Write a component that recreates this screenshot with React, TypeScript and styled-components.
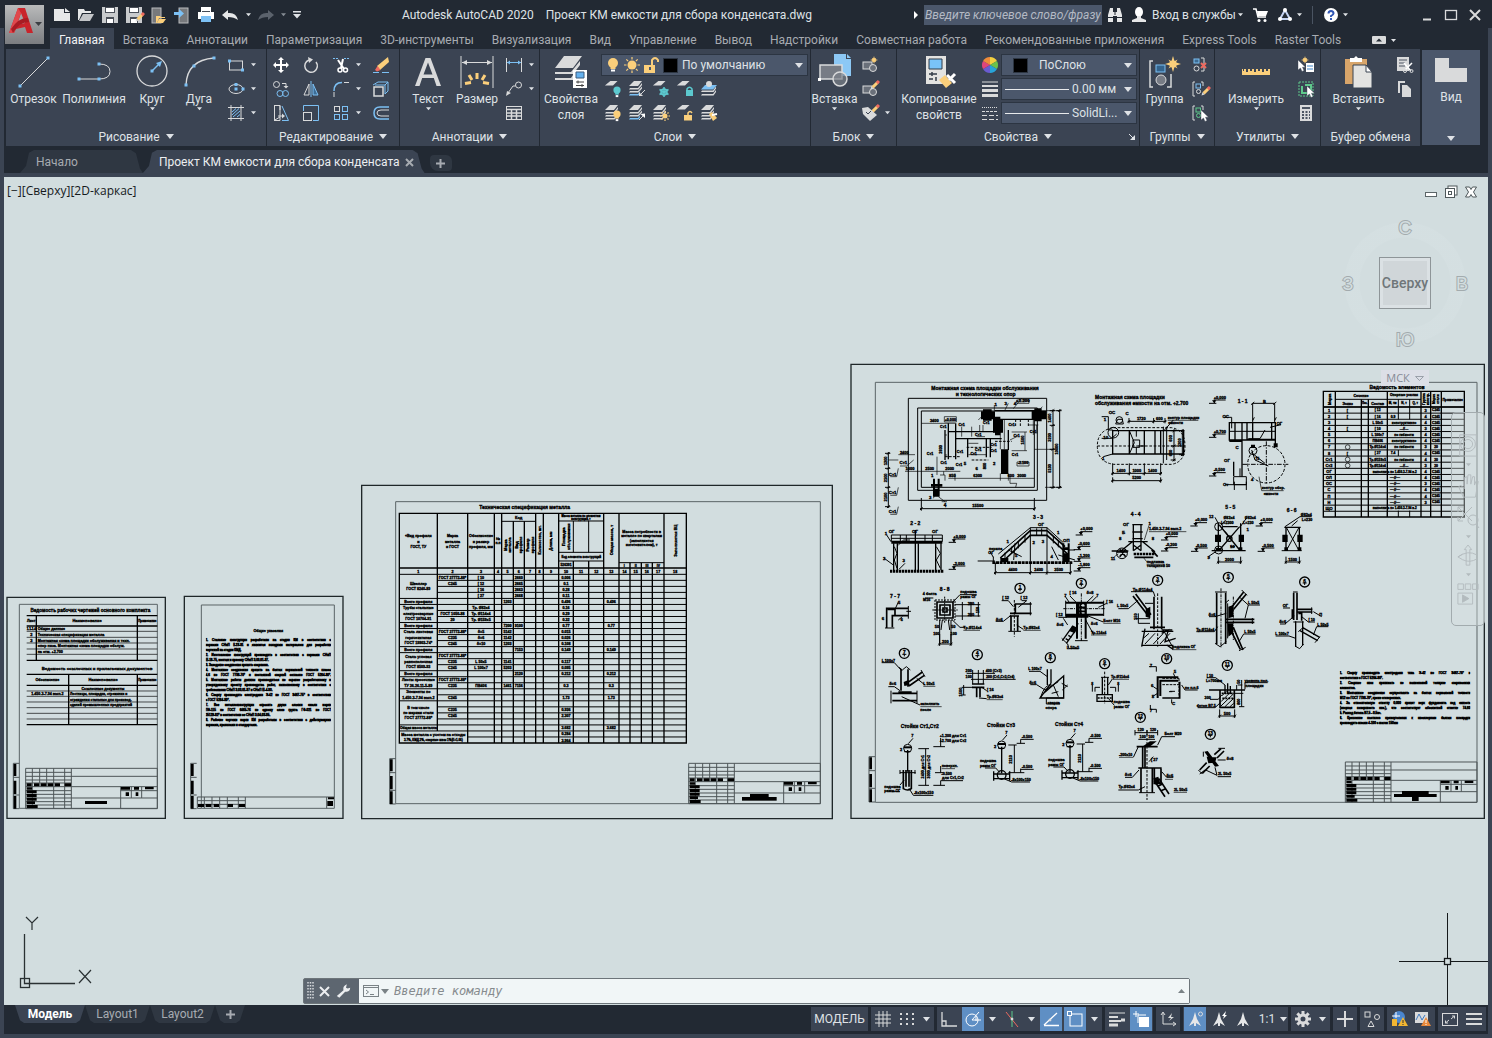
import React from "react";
import styled, { createGlobalStyle } from "styled-components";

/* ---------- palette ---------- */
const c = {
  chrome: "#222933",
  panel: "#3b4453",
  field: "#4b576b",
  active: "#5f8fc4",
  text: "#dfe2e6",
  dim: "#a7abb1",
  icon: "#d9dadb",
  blue: "#7cc0f4",
  amber: "#fbcf7b",
  teal: "#5cc9cf",
  green: "#5fc98c",
  red: "#ee6a5f",
  paper: "#d2dddf",
};

const GlobalStyle = createGlobalStyle`
  * { box-sizing: border-box; }
  html, body, #root { height: 100%; margin: 0; }
  body { background: ${c.chrome}; color: ${c.text}; font: 12px/16px Roboto, "Noto Sans", sans-serif; }
  button, input, select { font: inherit; color: inherit; margin: 0; }
  button { background: none; border: 0; padding: 0; }
`;

/* ---------- window ---------- */
const Window = styled.div`
  height: 100vh;
  min-height: 600px;
  display: flex;
  flex-direction: column;
  position: relative;
  overflow: hidden;
`;
const Frame = styled.div`
  flex: 1;
  min-height: 0;
  display: flex;
  flex-direction: column;
  border: solid ${c.panel};
  border-width: 0 4px 4px;
`;
const AppButton = styled.button`
  position: absolute;
  left: 5px;
  top: 5px;
  width: 39px;
  height: 39px;
  background: linear-gradient(#b9babb, #7b7d80);
  display: flex;
  align-items: center;
`;

/* ---------- title bar ---------- */
const TitleBar = styled.header`
  flex: none;
  height: 28px;
  display: flex;
  align-items: center;
  padding: 1px 5px 0 50px;
`;
const Cluster = styled.div`
  display: flex;
  align-items: center;
`;
const Tool = styled.button<{ $w?: number }>`
  width: ${(p) => p.$w ?? 24}px;
  height: 24px;
  flex: none;
  display: flex;
  align-items: center;
  justify-content: center;
`;
const Caption = styled.h1`
  flex: 1;
  margin: 0;
  font-size: 12px;
  font-weight: 400;
  white-space: pre;
  text-align: center;
`;
const Search = styled.input`
  width: 178px;
  height: 20px;
  padding: 0 1px;
  border: 0;
  background: ${c.field};
  font-style: italic;
  margin-right: 1px;
  &::placeholder { color: #b4bac4; opacity: 1; }
`;
const Login = styled.button`
  display: flex;
  align-items: center;
  justify-content: space-between;
  width: 91px;
  margin: 0 6px 0 1px;
  white-space: nowrap;
`;
const Rule = styled.span`
  width: 1px;
  height: 18px;
  background: #4a5462;
  margin: 0 6px 0 10px;
`;
const WinControls = styled(Cluster)`
  margin-left: 67px;
`;

/* ---------- ribbon ---------- */
const RibbonTabs = styled.nav`
  flex: none;
  display: flex;
  height: 21px;
  padding-left: 46px;
`;
const RibbonTab = styled.button<{ $on?: boolean }>`
  padding: 2px 9px 0;
  white-space: nowrap;
  color: ${(p) => (p.$on ? "#f1f2f4" : c.dim)};
  background: ${(p) => (p.$on ? c.panel : "none")};
`;
const Ribbon = styled.section`
  flex: none;
  display: flex;
  gap: 1px;
  height: 97px;
  padding-left: 2px;
`;
const Panel = styled.div<{ $w: number }>`
  width: ${(p) => p.$w}px;
  flex: none;
  background: ${c.panel};
  display: flex;
  flex-direction: column;
`;
const PanelBody = styled.div<{ $pad?: number }>`
  flex: 1;
  display: flex;
  padding: 4px 2px 0 ${(p) => p.$pad ?? 1}px;
`;
const PanelTitle = styled.button`
  height: 20px;
  display: flex;
  align-items: center;
  justify-content: center;
  gap: 6px;
  padding-top: 1px;
  position: relative;
`;
const Launcher = styled.span`
  position: absolute;
  right: 4px;
  top: 8px;
  display: flex;
`;
const Big = styled.button<{ $w: number }>`
  width: ${(p) => p.$w}px;
  flex: none;
  display: flex;
  flex-direction: column;
  align-items: center;
  justify-content: flex-start;
  padding-top: 1px;
  white-space: nowrap;
`;
const BigIcon = styled.svg`
  width: 36px;
  height: 36px;
  margin-bottom: 1px;
  overflow: visible;
`;
const Grid = styled.div<{ $cols: string; $gap?: number }>`
  display: grid;
  grid-template-columns: ${(p) => p.$cols};
  grid-auto-rows: 24px;
  column-gap: ${(p) => p.$gap ?? 0}px;
`;
const Split = styled.div`
  display: flex;
  justify-content: center;
`;
const Stack = styled.div`
  flex: 1;
  display: flex;
  flex-direction: column;
`;
const Combo = styled.label`
  height: 22px;
  margin: 1px 0;
  flex: none;
  display: flex;
  align-items: center;
  gap: 3px;
  padding: 0 4px 0 3px;
  background: ${c.field};
  border: 1px solid #2c3542;
`;
const Choice = styled.select`
  flex: 1;
  min-width: 0;
  appearance: none;
  border: 0;
  padding: 0;
  background: none;
`;
const Swatch = styled.span<{ $gap?: number }>`
  width: 15px;
  height: 15px;
  background: #000;
  border: 1px solid #2c3542;
  margin: 0 ${(p) => p.$gap ?? 1}px;
`;
const Sample = styled.span`
  width: 64px;
  height: 1px;
  background: #e8eaec;
`;
const ViewPanel = styled.button`
  width: 58px;
  margin: 1px 0 1px 1px;
  background: ${c.field};
  display: flex;
  flex-direction: column;
  align-items: center;
  justify-content: space-between;
  padding: 2px 0 4px;
`;
const ViewTop = styled.span`
  display: flex;
  flex-direction: column;
  align-items: center;
`;

/* ---------- file tabs ---------- */
const FileTabs = styled.nav`
  flex: none;
  display: flex;
  align-items: flex-end;
  height: 31px;
  padding: 0 0 0 16px;
  border-bottom: 4px solid ${c.panel};
`;
const FileTab = styled.div<{ $on?: boolean }>`
  height: 23px;
  display: flex;
  align-items: center;
  gap: 5px;
  padding: 1px ${(p) => (p.$on ? "11px" : "65px")} 0 16px;
  color: ${(p) => (p.$on ? "#eceef0" : c.dim)};
  background: ${(p) => (p.$on ? c.panel : "#2f3742")};
  clip-path: polygon(0 100%, 6px 70%, 9px 12%, 14px 0, calc(100% - 12px) 0, calc(100% - 7px) 14%, calc(100% - 3px) 80%, 100% 100%);
  white-space: nowrap;
`;
const AddFile = styled.button`
  width: 22px;
  height: 16px;
  margin: 0 0 2px 5px;
  border-radius: 4px 6px 4px 8px;
  background: #2f3742;
  display: flex;
  align-items: center;
  justify-content: center;
`;

/* ---------- canvas ---------- */
const Canvas = styled.main`
  flex: 1;
  min-height: 0;
  position: relative;
  background: ${c.paper};
  overflow: hidden;
`;
const Drawing = styled.svg`
  position: absolute;
  inset: 0;
  width: 100%;
  height: 100%;
  font-family: "Liberation Sans", Arial, sans-serif;
  font-weight: 700;
`;
const Justified = styled.div`
  font: 400 9px/15px "Liberation Sans", Arial, sans-serif;
  color: #000;
  -webkit-text-stroke: 2px #000;
  text-align: justify;
`;
const NoteLine = styled.p<{ $full?: boolean }>`
  margin: 0;
  height: 15px;
  white-space: nowrap;
  text-align-last: ${(p) => (p.$full ? "justify" : "left")};
`;
const ViewLabel = styled.div`
  position: absolute;
  left: 3px;
  top: 6px;
  color: #15191c;
  font: 12px/16px "Open Sans", "Noto Sans", sans-serif;
`;
const PlainBtn = styled.button`
  white-space: nowrap;
`;
const DocControls = styled.div`
  position: absolute;
  right: 10px;
  top: 8px;
  display: flex;
  gap: 6px;
`;
const Cube = styled.div`
  position: absolute;
  right: 14px;
  top: 38px;
  width: 138px;
  display: flex;
  flex-direction: column;
  align-items: center;
`;
const Compass = styled.div`
  width: 134px;
  height: 136px;
  display: grid;
  grid-template-columns: 20px 1fr 20px;
  grid-template-rows: 24px 1fr 24px;
  place-items: center;
  border-radius: 50%;
  background: radial-gradient(circle, transparent 45px, rgba(222, 232, 234, 0.2) 46px, rgba(222, 232, 234, 0.2) 60px, transparent 61px);
`;
const Cardinal = styled.button<{ $area: string }>`
  grid-area: ${(p) => p.$area};
  padding-top: 2px;
  font: 400 18px/20px "Liberation Sans", Arial, sans-serif;
  color: ${c.paper};
  -webkit-text-stroke: 2px #a3abae;
  paint-order: stroke fill;
`;
const Face = styled.button`
  grid-area: 2 / 2;
  width: 52px;
  height: 52px;
  border: 1px solid #8e9598;
  background: #d0d6d9;
  color: #6f7679;
  font: 500 14px/20px Roboto, "Noto Sans", sans-serif;
  box-shadow: inset 0 0 0 3px #dbe1e4;
`;
const Wcs = styled.button`
  width: 48px;
  height: 16px;
  margin-top: 19px;
  background: #dcdfe7;
  color: #858a96;
  font: 11px/16px "Open Sans", "Noto Sans", sans-serif;
  display: flex;
  align-items: center;
  justify-content: center;
  gap: 5px;
`;
const NavBar = styled.div`
  position: absolute;
  right: 3px;
  top: 235px;
  width: 34px;
  height: 214px;
  border: 1px solid #a2abae;
  border-radius: 5px;
  background: rgba(214, 224, 226, 0.4);
  display: flex;
  flex-direction: column;
  align-items: center;
  justify-content: space-between;
  padding: 20px 0 20px;
`;
const Ucs = styled.svg`
  position: absolute;
  left: 14px;
  bottom: 11px;
`;
const Crosshair = styled.svg`
  position: absolute;
  right: 0;
  bottom: 0;
`;
const CommandLine = styled.div`
  position: absolute;
  left: 299px;
  right: 298px;
  bottom: 1px;
  height: 26px;
  display: flex;
  border: 1px solid #6d757a;
  border-radius: 2px;
  background: #5d6670;
`;
const CommandTools = styled.div`
  width: 55px;
  display: flex;
  align-items: center;
  gap: 7px;
  padding-left: 3px;
`;
const CommandField = styled.label`
  flex: 1;
  display: flex;
  align-items: center;
  gap: 2px;
  padding: 0 4px;
  background: #f1f6f7;
`;
const CommandInput = styled.input`
  flex: 1;
  min-width: 0;
  border: 0;
  background: none;
  color: #222;
  font: italic 12px/16px "DejaVu Sans Mono", "Liberation Mono", monospace;
  padding: 0 3px;
  outline: 0;
  &::placeholder { color: #868b8e; opacity: 1; }
`;

/* ---------- bottom bar ---------- */
const BottomBar = styled.footer`
  flex: none;
  height: 29px;
  display: flex;
  justify-content: space-between;
  padding: 0 2px 0 11px;
  overflow: hidden;
`;
const LayoutTabs = styled.nav`
  display: flex;
  align-items: flex-start;
`;
const LayoutTab = styled.button<{ $on?: boolean; $w: number }>`
  width: ${(p) => p.$w}px;
  height: 18px;
  flex: none;
  font-weight: ${(p) => (p.$on ? 700 : 400)};
  color: ${(p) => (p.$on ? "#fff" : c.dim)};
  background: ${(p) => (p.$on ? c.panel : "#2f3742")};
  clip-path: polygon(0 0, 100% 0, calc(100% - 5px) 85%, calc(100% - 9px) 100%, 9px 100%, 5px 85%);
`;
const Status = styled.div`
  display: flex;
  gap: 3px;
  padding: 2px 0 3px;
`;
const Group = styled.div`
  display: flex;
  background: ${c.panel};
`;
const ModelButton = styled.button`
  width: 57px;
`;
const Toggle = styled.button<{ $on?: boolean }>`
  width: 24px;
  display: flex;
  align-items: center;
  justify-content: center;
  background: ${(p) => (p.$on ? c.active : "none")};
  border: solid ${c.panel};
  border-width: 0 1px;
`;
const Drop = styled.button<{ $w?: number }>`
  width: ${(p) => p.$w ?? 15}px;
  display: flex;
  align-items: center;
  justify-content: center;
`;

/* ---------- icon helpers ---------- */
const Glyph = styled.svg`
  flex: none;
  display: block;
  overflow: visible;
`;
type IconProps = { size?: number; children: React.ReactNode };
const Icon = ({ size = 16, children }: IconProps) => (
  <Glyph width={size} height={size} viewBox="0 0 16 16" fill="none" stroke={c.icon}>{children}</Glyph>
);
const Caret = ({ w = 6, color = c.text }: { w?: number; color?: string }) => (
  <Glyph width={w} height={w / 2 + 1} viewBox="0 0 8 5"><path d="M0 0H8L4 5Z" fill={color} /></Glyph>
);
const Plus = () => (
  <Glyph width="9" height="9" viewBox="0 0 9 9"><path d="M4.5 0V9M0 4.5H9" stroke={c.dim} strokeWidth="2" /></Glyph>
);
const Dots = ({ pts, s = 3 }: { pts: number[][]; s?: number }) => (
  <>{pts.map(([x, y], i) => <rect key={i} x={x - s / 2} y={y - s / 2} width={s} height={s} fill={c.blue} stroke="none" />)}</>
);

/* small ribbon icons */
const sheetTop = "M7 1H15L10 6H1Z";
const Layers = ({ blue }: { blue?: boolean }) => (
  <g stroke="none">
    <path d="M5 0H13L9 5H0Z" fill={c.icon} />
    <path d="M1 7H9L13 2V4L9.500 8.500H0Z" fill={c.icon} />
    <path d="M1 10H9L13 5.500V7.500L9.500 11.500H0Z" fill={c.icon} />
    <path d="M1 13H9L11 10.500V12.500L9.500 14.500H0Z" fill={blue ? c.blue : c.icon} />
  </g>
);
const Pencil = () => (
  <g stroke="none" transform="rotate(45 12 5)">
    <rect x="10.500" y="0" width="3" height="7" fill={c.amber} /><rect x="10.500" y="-2" width="3" height="3" fill={c.red} /><path d="M10.500 7H13.500L12 10Z" fill={c.icon} />
  </g>
);
const Bulb = ({ x = 8, y = 6, r = 4, color = c.amber }: { x?: number; y?: number; r?: number; color?: string }) => (
  <g stroke="none"><circle cx={x} cy={y} r={r} fill={color} /><rect x={x - r / 2} y={y + r - 1} width={r} height={2} fill={color} /><rect x={x - r / 2 + 0.5} y={y + r + 1.5} width={r - 1} height="2" fill="#fff" /></g>
);
const Sun = ({ x = 8, y = 8, r = 4, long = 7 }: { x?: number; y?: number; r?: number; long?: number }) => (
  <g stroke={c.amber}><circle cx={x} cy={y} r={r} fill={c.amber} stroke="none" />
    {[0, 45, 90, 135].map((a) => <path key={a} transform={`rotate(${a} ${x} ${y})`} strokeWidth="1.2" d={`M${x} ${y - long}V${y - r - 1}M${x} ${y + r + 1}V${y + long}`} />)}
  </g>
);
const Cursor = ({ x, y }: { x: number; y: number }) => (
  <path transform={`translate(${x} ${y})`} d="M0 0V10L2.500 8L4 11.500L6 10.500L4.500 7.200H7.500Z" fill="#fff" stroke={c.panel} strokeWidth=".4" />
);
const Star = ({ x, y, r }: { x: number; y: number; r: number }) => (
  <g fill={c.amber} stroke="none" transform={`translate(${x} ${y})`}>
    {[0, 45, 90, 135].map((a) => <path key={a} transform={`rotate(${a}) scale(${a % 90 ? 0.8 * r : r})`} d="M0 -1L.3 0L0 1L-.3 0Z" />)}
    <circle r={r * 0.45} />
  </g>
);
const icons = {
  rect: <><rect x="1.500" y="4" width="13" height="9" /><Dots pts={[[1.5, 4], [14.5, 13]]} /></>,
  ellipse: <><ellipse cx="8" cy="8" rx="7" ry="4.500" /><Dots pts={[[8, 8], [8, 3.5], [15, 8]]} /></>,
  hatch: <><path d="M3 0V16M13 0V16M0 2.500H16M0 13.500H16" /><path stroke={c.blue} d="M4 7L8 3.500M4 10L11 3.500M5 12L12 6M9 12L12 9.500" /></>,
  move: <path fill="#fff" stroke="none" d="M8 0L11 3H9V7H13V5L16 8L13 11V9H9V13H11L8 16L5 13H7V9H3V11L0 8L3 5V7H7V3H5Z" />,
  rotate: <><path strokeWidth="1.500" d="M6 3A6.300 6.300 0 1 0 13 5" /><path d="M5 0L10 2.500L6 6Z" fill={c.icon} stroke="none" /></>,
  trim: <><path stroke={c.blue} strokeDasharray="2 1" d="M0 1.500H6M11 1.500H16" /><path strokeWidth="2" d="M5 3L11 12M10 2L8 11" stroke="#fff" /><circle cx="7" cy="13" r="2" strokeWidth="1.500" stroke="#fff" /><circle cx="12.500" cy="13" r="2" strokeWidth="1.500" stroke="#fff" /></>,
  erase: <><path d="M15 0L16 5L7 13L4 9Z" fill={c.amber} stroke="none" /><path d="M4.500 9L7.500 13L4 14.500L2 13Z" fill={c.red} stroke="none" /><path stroke={c.blue} d="M0 15.500H6M9 15.500H16" /></>,
  copy: <><circle cx="3.500" cy="3.500" r="3" /><path d="M9 2.500H13V5" /><path d="M10.500 5H15.500L13 7.500Z" fill={c.icon} stroke="none" /><circle cx="7" cy="12.500" r="3" stroke={c.blue} /><circle cx="12.500" cy="12.500" r="3" stroke={c.blue} /></>,
  mirror: <><path d="M6 3V14H1Z" /><path d="M10 3V14H15Z" stroke={c.blue} fill="#3d6c94" /><path d="M8 0V16" stroke={c.blue} /></>,
  fillet: <><path stroke={c.blue} d="M1 10Q1 1.500 9 1.500" strokeWidth="1.500" /><path d="M1 11V16M11 1.500H16" /></>,
  explode: <><rect x="1" y="6" width="9" height="9" strokeWidth="1.500" /><path stroke={c.blue} d="M0 4L5 1H15V10L12 13M12 4H2M12 4L15 1M12 4V13" /></>,
  stretch: <><path d="M1 0.500H7V5M7 12V15.500H1ZV.5" /><path d="M1.500 0V16M5 11H10" /><path d="M9 8.500V13.500L12 11Z" fill={c.icon} stroke="none" /><path stroke={c.blue} d="M9 1L15.500 15.500H9" /></>,
  scale: <><path stroke={c.blue} d="M0.500 6V.5H15.500V15.500H10" /><rect x=".5" y="7.500" width="8" height="8" /></>,
  array: <><rect x="1.500" y="1.500" width="5" height="5" /><g stroke={c.blue}><rect x="9.500" y="1.500" width="5" height="5" /><rect x="1.500" y="9.500" width="5" height="5" /><rect x="9.500" y="9.500" width="5" height="5" /></g></>,
  offset: <><path d="M16 5H8Q4 5 4 8T8 11H16" /><path stroke={c.blue} strokeWidth="1.500" d="M16 2H7Q1 2 1 8T7 14H16" /></>,
  dim: <><path d="M.5 1V15M15.500 1V15" /><path stroke={c.blue} d="M1 5.500H15" /><path fill={c.blue} stroke="none" d="M1 5.500L4 3.500V7.500ZM15 5.500L12 3.500V7.500Z" /></>,
  leader: <><circle cx="12.500" cy="4" r="3" /><path d="M9.500 5H7L2 12" /><path d="M0 15L1 10L5 12Z" fill={c.icon} stroke="none" /></>,
  table: <><rect x=".5" y="1.500" width="15" height="13" /><path strokeWidth="1.500" d="M.5 4.500H15.500M.5 8H15.500M.5 11H15.500M5.500 4V15M10.500 4V15" /></>,
  lOff: <><path d={sheetTop} transform="translate(-1 -1) scale(.9)" fill={c.icon} stroke="none" /><Bulb x={12} y={9} r={3.6} color={c.teal} /></>,
  lIso: <><Layers blue /><path d="M16 9L12 13" /><path d="M10 11V15H14Z" fill={c.icon} stroke="none" /></>,
  lFreeze: <><path d={sheetTop} transform="translate(-1 -1) scale(.9)" fill={c.icon} stroke="none" /><g stroke={c.teal} strokeWidth="1.500"><circle cx="11" cy="11" r="3" /><path d="M11 6V16M6.500 8.500L15.500 13.500M6.500 13.500L15.500 8.500" /></g></>,
  lLock: <><path d={sheetTop} transform="translate(-1 -1) scale(.9)" fill={c.icon} stroke="none" /><path stroke={c.teal} strokeWidth="1.500" d="M10 10V8Q12.500 4.500 15 8V10" /><rect x="9" y="9" width="7" height="6" fill={c.teal} stroke="none" /></>,
  lMake: <><g stroke="none" fill={c.icon}><path d="M1 9.500H12L15 5.500V7.500L12.500 11H0ZM1 13H12L15 9V11L12.500 14.500H0Z" /></g><path stroke="none" fill={c.blue} d="M4 4H16L12 8.500H0Z" /><circle cx="8" cy="3" r="3" fill={c.icon} stroke="none" /></>,
  lOn: <><Layers /><Bulb x={12} y={9} r={3.6} /></>,
  lUniso: <><Layers blue /><path d="M10 15L14 11" /><path d="M16 8.500V13L11.500 9Z" fill="#fff" stroke="none" /></>,
  lThaw: <><Layers /><Sun x={12} y={11} r={2.5} long={5} /></>,
  lUnlock: <><path d={sheetTop} transform="translate(-1 -1) scale(.9)" fill={c.icon} stroke="none" /><path stroke={c.amber} strokeWidth="1.500" d="M11 10V8Q13 5 15 8" /><rect x="7" y="10" width="8" height="5.500" fill={c.amber} stroke="none" /></>,
  lMatch: <><Layers /><path stroke="none" fill={c.amber} d="M8 9L11 7L16 13L12 16Z" /><path d="M11 10L16 9" stroke="#fff" strokeWidth="2" /></>,
  blkNew: <><rect x="1" y="5" width="9" height="7" fill="#6a707a" /><circle cx="11" cy="11" r="3.500" fill="#6a707a" /><Star x={12} y={3} r={4} /></>,
  blkEdit: <><rect x="1" y="5" width="9" height="7" fill="#6a707a" /><circle cx="11" cy="11" r="3.500" fill="#6a707a" /><Pencil /></>,
  attr: <><path d="M0 3L6 2L15 10L8 16L1 9Z" fill={c.icon} stroke="none" /><path stroke={c.panel} d="M4 7L6 9L9 6" /><Pencil /></>,
  ungroup: <><rect x="2" y="2" width="5" height="4" fill="#3d6c94" stroke={c.blue} /><circle cx="4.500" cy="11.500" r="2.500" /><path d="M9 1H12V14H9" /><path stroke={c.red} strokeWidth="2" d="M9 6L14 11M14 6L9 11" /></>,
  groupEdit: <><path d="M3 1H1V15H3M9 1H11V5" /><rect x="4" y="3" width="4.500" height="4" stroke={c.blue} /><circle cx="6.500" cy="10.500" r="2" /><g transform="translate(1 6)"><Pencil /></g></>,
  groupPick: <><path d="M3 1H1V15H3M9 1H11V5" /><rect x="4" y="3" width="4.500" height="4" stroke={c.green} /><circle cx="6.500" cy="10.500" r="2" stroke={c.green} /><Cursor x={9} y={5} /></>,
  quick: <><rect x="8" y="6" width="8" height="9" fill="#fff" stroke="none" /><path stroke="#3f86c9" d="M9 9H15M9 12H15" /><Star x={7} y={3} r={4} /><Cursor x={0} y={3} /></>,
  selAll: <><rect x="1" y="1" width="14" height="14" stroke={c.green} strokeDasharray="2 1" /><path stroke={c.green} strokeWidth="2" d="M4 5V12H10M7 4H13V9" /><Cursor x={9} y={5} /></>,
  calc: <><rect x="2" y="0" width="12" height="16" fill={c.icon} stroke="none" /><path stroke="#4c5563" strokeWidth="2" d="M4 3H12" /><path stroke="#4c5563" strokeWidth="2" strokeDasharray="2 1.500" d="M4 7H12M4 10H12M4 13H12" /></>,
  cut: <><rect x="0" y="0" width="12" height="14" fill={c.icon} stroke="none" /><path stroke="#4c5563" d="M2 3H10M2 6H8M2 9H8" /><path d="M7 6L14 14M15 6L8 13" stroke="#fff" strokeWidth="1.500" /><circle cx="8" cy="14" r="1.500" /><circle cx="14.500" cy="14" r="1.500" /></>,
  copyDoc: <><path d="M1 0H8V2H3V12H1Z" fill={c.icon} stroke="none" /><path d="M5 4H10L14 8V16H5Z" fill={c.icon} stroke="none" /></>,
  newDoc: <path stroke="none" fill="#e6e7e8" d="M0 2H10V6H16V14H0ZM11 1L16 5H11Z" />,
  open: <><path stroke="none" fill="#e6e7e8" d="M0 2H6L7 4H13V6H4L1 13H0Z" /><path stroke="none" fill="#c3c5c8" d="M5 7H16L12 14H1Z" /></>,
  save: <><path stroke="none" fill="#c9cbcd" d="M0 0H16V16H0Z" /><path stroke="none" fill="#4a4f58" d="M3 0H13V6H3ZM4 10H12V16H4Z" /><path stroke="none" fill="#fff" d="M4 1H12V5H4ZM5 12H11V16H5Z" /></>,
  plot: <><path stroke="none" fill="#fff" d="M3 0H13V5H16V12H0V5H3Z" /><path stroke="none" fill="#444b56" d="M4 4H12V5H4Z" /><path stroke="none" fill={c.blue} d="M3 9H13V15H3Z" /></>,
};
const Small = ({ n }: { n: keyof typeof icons }) => <Tool aria-label={n}><Icon>{icons[n]}</Icon></Tool>;
const WithDrop = ({ n }: { n: keyof typeof icons }) => (
  <Split><Small n={n} /><Drop $w={10} aria-label="Ещё"><Caret w={5} /></Drop></Split>
);

/* large ribbon icons, 36 × 36 */
const big = {
  line: <><path d="M4 32L32 4" stroke={c.icon} /><Dots pts={[[4, 32], [32, 4]]} /></>,
  pline: <><path fill="none" stroke={c.icon} d="M3 25H23Q34 25 34 17.500T23 10" /><Dots pts={[[3, 25], [23, 25], [23, 10]]} /></>,
  circle: <><circle cx="18" cy="17" r="15" fill="none" stroke={c.icon} strokeWidth="1.300" /><path stroke={c.blue} strokeWidth="1.500" d="M18 17L26 9" /><path fill={c.blue} d="M28 7L22 9L26 13Z" /><Dots pts={[[18, 17]]} /></>,
  arc: <><path fill="none" stroke={c.icon} strokeWidth="1.300" d="M5 31Q6 6 33 4" /><Dots pts={[[5, 31], [13, 12], [33, 4]]} /></>,
  text: <path fill={c.icon} fillRule="evenodd" d="M15.500 4H20.500L31 32H26.500L23.800 24H12.200L9.500 32H5ZM18 8.500L13.500 20.500H22.500Z" />,
  dim: <><path stroke={c.icon} d="M2 2V34M34 2V34M3 8.500H33" /><path fill={c.icon} d="M3 8.500L8 6V11ZM33 8.500L28 6V11Z" /><g stroke={c.amber} strokeWidth="3"><path d="M18 19V25M10 21L13 26M26 21L23 26M6 29.500L12 28.500M30 29.500L24 28.500" /></g></>,
  layerProps: <><path fill={c.icon} d="M11 2H29L20 14H2ZM2 18H18L27 7V11L20 20H2ZM2 24H18L20 21V26H2Z" /><path fill="#fff" d="M20 16H34V34H20Z" /><path fill="#64b1ee" stroke="#3a5b7c" d="M23 18H31V24H23Z" /><path stroke="#444" d="M23 28H31M23 31.500H31M25 26.500V29.500M29 30V33" /></>,
  insert: <><path fill="#8cc8f5" d="M17 0H29V5H34V22H17Z" /><path fill="#8cc8f5" d="M30 0L34 4H30Z" /><path fill="#777c85" stroke={c.icon} strokeWidth="1.500" d="M3 25V11H25V25Z" /><circle cx="23" cy="25" r="7" fill="#7b818ab0" stroke={c.icon} strokeWidth="1.500" /><path fill="#fff" d="M1 24H4V27H1Z" /></>,
  match: <><path fill="#e3e3e1" d="M5 2H25V30H5Z" /><path fill="#79c3f8" stroke="#333d48" d="M8 5H21V15H8Z" /><path stroke="#333d48" strokeWidth="1.500" d="M8 20H16M8 25H12M11 18V22M15 23V27" /><path fill={c.amber} d="M18 26L24 21L31 29L25 34Z" /><path stroke="#fff" strokeWidth="3" d="M26 21L34 29M28 26L34 20" /></>,
  group: <><path fill="none" stroke={c.icon} strokeWidth="1.500" d="M6 7H3V33H6M20 33H24V20" /><rect x="9" y="11" width="9" height="7" fill="#34648d" stroke={c.blue} /><circle cx="14" cy="26" r="5" fill="#777c85" stroke={c.icon} /><Star x={26} y={10} r={8} /></>,
  measure: <path fill={c.amber} d="M4 21H32V15H30V17H28V15H26V18H24V15H22V17H20V15H18V18H16V15H14V17H12V15H10V18H8V15H6V17H5V15H4Z" />,
  paste: <><path fill="#d8a56a" d="M4 5H26V30H4Z" /><path fill="#fff" d="M9 8V4H13L15 2L17 4H21V8Z" /><path fill="#e3e3e1" stroke={c.panel} d="M12 11H25L31 18V34H12Z" /><path fill="#fff" stroke={c.panel} d="M25 11V18H31Z" /></>,
  view: <path fill={c.icon} d="M2 6H16V16H34V30H2Z" />,
};
const BigTool = ({ n, w, label, second, drop }: { n: keyof typeof big; w: number; label: string; second?: string; drop?: boolean }) => (
  <Big $w={w}>
    <BigIcon viewBox="0 0 36 36">{big[n]}</BigIcon>
    <span>{label}</span>
    {second && <span>{second}</span>}
    {drop && <Caret w={5} />}
  </Big>
);
const Title = ({ children, plain }: { children: React.ReactNode; plain?: boolean }) => (
  <PanelTitle>{children}{!plain && <Caret w={8} />}</PanelTitle>
);

/* ---------- drawing primitives ---------- */
const ink = "#000";
type Pt = [number, number];
const P = ({ d, w = 3, dash, fill = "none", color = ink }: { d: string; w?: number; dash?: string; fill?: string; color?: string }) => (
  <path d={d} stroke={color} strokeWidth={w} strokeDasharray={dash} fill={fill} />
);
const T = ({ x, y, s = 13, a = "middle", r, children }: { x: number; y: number; s?: number; a?: "start" | "middle" | "end"; r?: number; children: React.ReactNode }) => (
  <text x={x} y={y + s / 3} fontSize={s} textAnchor={a} fill={ink} stroke={ink} strokeWidth="1" transform={r ? `rotate(${r} ${x} ${y})` : undefined}>{children}</text>
);
/* a callout: underlined text with a leader to a point */
const Lead = ({ x, y, t, to, w = 34 }: { x: number; y: number; t: string; to?: Pt; w?: number }) => (
  <>
    <T x={x} y={y} a="start" s={11}>{t}</T>
    <P d={`M${x} ${y + 8}H${x + w}${to ? `M${to[0] > x ? x + w : x} ${y + 8}L${to[0]} ${to[1]}` : ""}`} w={2} />
  </>
);
/* an elevation mark */
const Level = ({ x, y, t }: { x: number; y: number; t: string }) => (
  <><T x={x} y={y} a="start" s={12}>{t}</T><P d={`M${x} ${y + 8}H${x + 36}M${x - 14} ${y + 18}H${x + 8}M${x + 2} ${y + 8}V${y + 17}`} w={3} /><path d={`M${x - 5} ${y + 9}H${x + 8}L${x + 2} ${y + 18}Z`} /></>
);
/* a horizontal dimension chain */
const Chain = ({ y, xs, labels, h = 10 }: { y: number; xs: number[]; labels: string[]; h?: number }) => (
  <>
    <P d={`M${xs[0] - 4} ${y}H${xs[xs.length - 1] + 4}` + xs.map((x) => `M${x} ${y - h}V${y + 6}M${x - 4} ${y + 4}L${x + 4} ${y - 4}`).join("")} w={3} />
    {labels.map((l, i) => <T key={i} x={(xs[i] + xs[i + 1]) / 2} y={y - 8} s={12}>{l}</T>)}
  </>
);
const ChainV = ({ x, ys, labels }: { x: number; ys: number[]; labels: string[] }) => (
  <>
    <P d={`M${x} ${ys[0] - 4}V${ys[ys.length - 1] + 4}` + ys.map((y) => `M${x - 10} ${y}H${x + 6}M${x - 4} ${y + 4}L${x + 4} ${y - 4}`).join("")} w={3} />
    {labels.map((l, i) => <T key={i} x={x - 9} y={(ys[i] + ys[i + 1]) / 2} s={12} r={-90}>{l}</T>)}
  </>
);
const NodeMark = ({ x, y, n }: { x: number; y: number; n: string }) => (
  <><circle cx={x} cy={y} r="15" fill="none" stroke={ink} strokeWidth="4" /><T x={x} y={y - 3} s={14}>{n}</T><P d={`M${x - 6} ${y + 3}H${x + 6}M${x} ${y + 2}V${y + 9}`} w={3} /></>
);
const Third = ({ x, y, children }: { x: number; y: number; children: React.ReactNode }) => (
  <g transform={`translate(${x} ${y}) scale(.33333)`}>{children}</g>
);
const Notes = ({ x, y, w, lines }: { x: number; y: number; w: number; lines: [string, boolean][] }) => (
  <foreignObject x={x} y={y} width={w} height={lines.length * 16}>
    <Justified>{lines.map(([t, full], i) => <NoteLine key={i} $full={full}>{t}</NoteLine>)}</Justified>
  </foreignObject>
);
/* title block, 395 × 121 units */
const Stamp = ({ x, y, name }: { x: number; y: number; name: number[][] }) => (
  <g transform={`translate(${x} ${y})`}>
    <P color="#4d5557" w={3} d="M0 0H395V121H0ZM20 0V121M42 0V55M63 0V55M84 0V121M117 0V121M137 0V121M0 12H137M0 24H395M0 35H137M0 44H137M0 55H395M0 67H137M0 78H137M0 89H137M0 100H137M0 110H137M137 89H395M285 55V121M285 67H395M317 55V89M348 55V89" />
    <path d="M3 45H18V54H3ZM25 45H40V54H25ZM45 45H62V54H45ZM66 45H82V54H66ZM87 45H103V54H87ZM117 45H136V54H117ZM3 57H19V64H3ZM3 66H33V75H3ZM3 77H33V86H3ZM3 88H33V97H3ZM3 99H28V107H3ZM3 110H36V119H3ZM286 56H313V64H286ZM325 56H340V64H325ZM358 56H384V63H358ZM300 72H310V83H300ZM330 72H338V83H330Z" />
    {name.map(([nx, ny, w, h], i) => <rect key={i} x={nx} y={ny} width={w} height={h} />)}
  </g>
);
const SideStrip = ({ x, y }: { x: number; y: number }) => (
  <g transform={`translate(${x} ${y})`}>
    <P color="#4d5557" d="M18 0H0V136H18M0 42H18M0 95H18" />
    <path d="M1 2H9V38H1ZM1 52H9V92H1ZM1 98H9V136H1Z" />
  </g>
);

/* ---------- sheet 1 ---------- */
const SheetOne = () => (
  <Third x={0} y={590}>
    <P color="#1f2729" w={4} d="M21 22H496V685H21Z" />
    <P color="#5a6365" d="M58 43H472V655H58Z" />
    <T x={271} y={60} s={14}>Ведомость рабочих чертежей основного комплекта</T>
    <P w={4} d="M80 77H472M80 108H472M109 77V211M412 77V211M80 211H472" />
    <P w={2} d="M80 124H472M80 142H472M80 159H472M80 177H472M80 193H472" />
    <T x={94} y={93} s={11}>Лист</T><T x={261} y={93} s={12}>Наименование</T><T x={442} y={93} s={9}>Примечание</T>
    <T x={94} y={117} s={9}>1.1-1.4</T><T x={94} y={134} s={12}>2</T><T x={94} y={152} s={12}>3</T>
    {["Общие данные", "Техническая спецификация металла", "Монтажная схема площадки обслуживания и техн.", "опор низа. Монтажная схема площадки обслуж.", "на отм. +2.700"].map((t, i) => <T key={i} x={113} y={117 + i * 17} a="start" s={11}>{t}</T>)}
    <T x={291} y={237} s={13}>Ведомость ссылочных и прилагаемых документов</T>
    <P w={4} d="M80 253H472M80 286H472M206 253V404M412 253V404M80 404H472" />
    <P w={2} d="M80 303H472M80 319H472M80 336H472M80 353H472M80 370H472M80 387H472" />
    <T x={142} y={270} s={11}>Обозначение</T><T x={309} y={270} s={12}>Наименование</T><T x={442} y={270} s={9}>Примечание</T>
    <T x={309} y={295} s={11}>Ссылочные документы</T><T x={142} y={311} s={11}>1.450.3-7.94 вып.2</T>
    {["Лестницы, площадки, стремянки и", "ограждения стальные для производ.", "зданий промышленных предприятий"].map((t, i) => <T key={i} x={210} y={312 + i * 17} a="start" s={10}>{t}</T>)}
    <Stamp x={77} y={535} name={[[178, 98, 66, 9]]} />
    <SideStrip x={40} y={520} />
  </Third>
);

/* ---------- sheet 2 ---------- */
const general: [string, boolean][] = [
  ["1. Стальные конструкции разработаны на стадии КМ в соответствии с", true],
  ["нормами СНиП II-23-81 и являются исходным материалом для разработки", true],
  ["чертежей на стадии КМД.", false],
  ["2. Изготовление конструкций производить в соответствии с нормами СНиП", true],
  ["III-18-75, монтаж и приемку СНиП 3.03.01-87.", false],
  ["3. Заводские соединения принять сварными.", false],
  ["4. Монтажные соединения принять на болтах нормальной точности класса", true],
  ["4.6 по ГОСТ 7798-70* и постоянной сваркой согласно ГОСТ 5264-80*.", true],
  ["5. Монтажные работы должны производиться по заранее разработанному и", true],
  ["утвержденному проекту производства работ, выполненному в соответствии с", true],
  ["требованиями СНиП 3.03.01-87 и СНиП III-4-80.", false],
  ["6. Сварку производить электродами Э-42 по ГОСТ 9467-75* в соответствии", true],
  ["с ГОСТ 5264-80*.", false],
  ["7. Все металлоконструкции окрасить двумя слоями эмали марки", true],
  ["ПФ-115 по ГОСТ 6465-76 по одному слою грунта ГФ-021 по ГОСТ", true],
  ["25129-82* в соответствии со СНиП 3.04.03-85.", false],
  ["8. Рабочие чертежи марки КМ разработаны в соответствии с действующими", true],
  ["нормами, правилами и стандартами.", false],
];
const SheetTwo = () => (
  <Third x={0} y={590}>
    <P color="#1f2729" w={4} d="M553 19H1029V685H553Z" />
    <P color="#5a6365" d="M604 45H1003V655H604Z" />
    <T x={805} y={121} s={11}>Общие указания</T>
    <Notes x={617} y={143} w={376} lines={general} />
    <P color="#4d5557" d="M592 621H1003M592 621V655H604M613 621V655M636 621V655M659 621V655M682 621V655M715 621V655M736 621V655M592 632H736M592 643H736M980 621V655" />
    <path d="M594 642H612V651H594ZM617 642H634V651H617ZM641 642H657V651H641ZM683 642H699V651H683ZM716 642H735V651H716ZM984 622H1002V628H984ZM982 633H999V648H982Z" />
    <SideStrip x={572} y={520} />
  </Third>
);

/* ---------- sheet 3 ---------- */
const colX = [118, 232, 323, 403, 425, 460, 493, 527, 550, 596, 640, 686, 731, 777, 810, 844, 877, 912, 979];
const rowY = (r: number) => 283 + r * 18.07;
const cells: [number, number, string][] = [
  [0, 2, "ГОСТ 27772-88*"], [0, 3, "[ 10"], [0, 6, "2660"], [0, 10, "0.006"],
  [1, 2, "С245"], [1, 3, "[ 12"], [1, 6, "2665"], [1, 10, "0.1"],
  [2, 3, "[ 16"], [2, 6, "2663"], [2, 10, "0.28"], [3, 3, "[ 27"], [3, 6, "2668"], [3, 10, "0.11"],
  [4, 1, "Всего профиля"], [4, 5, "1203"], [4, 10, "0.496"], [4, 13, "0.496"],
  [5, 3, "Тр. Ø83x4"], [5, 10, "0.16"], [6, 2, "ГОСТ 1050-88"], [6, 3, "Тр. Ø114x4"], [6, 10, "0.29"],
  [7, 2, "20"], [7, 3, "Тр. Ø159x5"], [7, 10, "0.32"],
  [8, 1, "Всего профиля"], [8, 5, "7200"], [8, 6, "9100"], [8, 10, "0.77"], [8, 13, "0.77"],
  [9, 2, "ГОСТ 27772-88*"], [9, 3, "δ=5"], [9, 5, "5142"], [9, 10, "0.015"],
  [10, 2, "С235"], [10, 3, "δ=6"], [10, 5, "1142"], [10, 10, "0.026"],
  [11, 2, "С245"], [11, 3, "δ=10"], [11, 5, "1203"], [11, 10, "0.108"],
  [12, 1, "Всего профиля"], [12, 6, "7153"], [12, 10, "0.149"], [12, 13, "0.149"],
  [13, 2, "ГОСТ 27772-88*"], [14, 2, "С235"], [14, 3, "L 50x5"], [14, 5, "1141"], [14, 10, "0.117"],
  [15, 2, "С245"], [15, 3, "L 100x7"], [15, 5, "5203"], [15, 10, "0.095"],
  [16, 1, "Всего профиля"], [16, 6, "2120"], [16, 10, "0.212"], [16, 13, "0.212"],
  [17, 2, "ГОСТ 27772-88*"], [18, 2, "С235"], [18, 3, "ПВ406"], [18, 5, "1461"], [18, 6, "7156"], [18, 10, "0.3"], [18, 13, "0.3"],
  [20, 2, "С245"], [20, 10, "1.73"], [20, 13, "1.73"], [22, 2, "С235"], [22, 10, "0.936"], [23, 2, "С245"], [23, 10, "2.307"],
  [25, 10, "3.682"], [25, 13, "3.682"], [26, 10, "0.284"], [27, 10, "3.964"],
];
const merged: [number, string[]][] = [
  [2, ["Швеллер", "ГОСТ 8240-89"]], [6.5, ["Трубы стальные", "электросварные", "ГОСТ 10704-91"]],
  [10.5, ["Сталь листовая", "горячекатаная", "ГОСТ 19903-74*"]], [14.5, ["Сталь угловая", "равнополочная", "ГОСТ 8509-93"]],
  [18, ["Листы просечные", "ТУ 36.26.11-5-89"]], [20, ["Элементы по", "1.450.3-7.94 вып.2"]], [23, ["В том числе", "по маркам стали", "ГОСТ 27772-88*"]],
];
const groupEnds = [0, 4, 5, 8, 9, 12, 13, 16, 17, 19, 21, 25, 26, 28];
const SheetThree = () => {
  const rows = Array.from({ length: 28 }, (_, r) => {
    const x = groupEnds.includes(r) ? 118 : r === 27 ? 323 : 232;
    return `M${x} ${rowY(r)}H979`;
  }).join("");
  const cols = colX.map((x, i) => {
    const top = [5, 6].includes(i) ? 124 : [10, 11].includes(i) ? 243 : [14, 15, 16].includes(i) ? 248 : 100;
    const bottom = i === 1 ? rowY(26) : 789;
    return `M${x} ${top}V${bottom}`;
  }).join("");
  return (
    <Third x={360} y={480}>
      <P color="#1f2729" w={4} d="M5 16H1417V1016H5Z" />
      <P color="#5a6365" d="M107 65H1381V971H107Z" />
      <T x={494} y={81} s={15}>Техническая спецификация металла</T>
      <P w={4} d={`M118 100H979V789H118ZM118 264H979${cols}`} />
      <P w={3} d={`${rows}M425 124H527M596 123H731M596 217H731M596 243H731M640 123V217M686 123V217M777 248H912`} />
      {[["«Вид профиля", "и", "ГОСТ, ТУ"], ["Марка", "металла", "и ГОСТ"], ["Обозначение", "и размер", "профиля, мм"]].map((ls, i) =>
        ls.map((t, j) => <T key={t + j} x={(colX[i] + colX[i + 1]) / 2} y={167 + j * 17} s={11}>{t}</T>))}
      <T x={414} y={175} s={11}>№</T><T x={414} y={190} s={10}>п.п</T><T x={476} y={112} s={12}>Код</T>
      <T x={436} y={195} s={11} r={-90}>Марка</T><T x={448} y={195} s={11} r={-90}>металла</T>
      <T x={470} y={195} s={11} r={-90}>Вид</T><T x={483} y={195} s={11} r={-90}>профиля</T>
      <T x={504} y={195} s={11} r={-90}>Размер</T><T x={517} y={195} s={11} r={-90}>профиля</T>
      <T x={539} y={180} s={11} r={-90}>Количество, шт.</T><T x={573} y={183} s={11} r={-90}>Длина, мм</T>
      <T x={663} y={107} s={8}>Масса металла по элементам</T><T x={663} y={117} s={8}>конструкций, т</T>
      <T x={611} y={170} s={11} r={-90}>Площадка</T><T x={625} y={170} s={11} r={-90}>обслуживания</T>
      <T x={664} y={230} s={9}>Код элемента конструкций</T><T x={618} y={254} s={10}>526391</T>
      <T x={754} y={180} s={12} r={-90}>Общая масса, т</T>
      {["Масса потребности в", "металле по кварталам", "(заполняется", "изготовителем), т"].map((t, i) => <T key={t} x={845} y={155 + i * 13} s={11}>{t}</T>)}
      {["I", "II", "III", "IV"].map((t, i) => <T key={t} x={793 + i * 34} y={257} s={10}>{t}</T>)}
      <T x={946} y={182} s={12} r={-90}>Заполняется ВЦ</T>
      {colX.slice(0, 18).map((x, i) => <T key={i} x={(x + colX[i + 1]) / 2} y={274} s={11}>{i + 1}</T>)}
      {cells.map(([r, k, t], i) => <T key={i} x={(colX[k - 1] + colX[k]) / 2} y={rowY(r) + 10} s={11}>{t}</T>)}
      {merged.map(([r, ls]) => ls.map((t, j) => <T key={t + r} x={175} y={rowY(r) + (j - (ls.length - 1) / 2) * 16} s={11}>{t}</T>))}
      <T x={175} y={745} s={10}>Общая масса металла</T>
      <T x={220} y={764} s={11}>Масса металла с учетом на отходы</T>
      <T x={220} y={780} s={9}>3.7%, КМД 2%, сварные швы 1%(К=1.06)</T>
      <Stamp x={986} y={850} name={[[184, 92, 56, 9], [160, 101, 104, 11]]} />
      <SideStrip x={89} y={836} />
    </Third>
  );
};

/* ---------- sheet 4 ---------- */
const Plans = () => (
  <Third x={845} y={360}>
    <T x={420} y={84} s={15}>Монтажная схема площадки обслуживания</T>
    <T x={422} y={103} s={15}>и технологических опор</T>
    <P w={3} d="M190 115H605V421H190Z" /><P d="M218 144H577V391H218ZM229 153H568V382H229Z" />
    <path d="M408 154H450V178H408ZM414 148H440V182H414ZM560 152H604V178H560ZM568 145H590V184H568ZM444 178H474V218H444ZM450 170H466V226H450ZM468 268H490V342H468ZM258 372H292V380H258ZM264 356H270V410H264ZM278 356H284V410H278ZM264 386H284V410H264Z" />
    <P w={4} d="M448 152H570M448 178H570M310 190V298M332 190V298M310 215H470M332 236H470M368 236V292M424 236V292M436 236V292M490 210V270M300 210V300" />
    <P w={2} d="M466 215V268M478 178V268M229 190H330M310 355H568M330 340V362M466 340V362M490 340V362M540 216V272M500 216H546M500 272H546M370 250H400M370 284H424M300 225H306M300 285H306M350 200V230M380 200V230M395 230H420M404 195V215M414 195V215M515 130H552V120H515ZM448 135V150M490 130L480 150M530 115L505 146M592 140L578 156M400 180L410 170M495 240L515 230M285 345H300V362M265 415L272 400M280 410L300 425M290 425H306M495 350V370H515L512 382M516 306H552V318H516Z" />
    <P w={3} dash="8 4" d="M300 290H345M365 262H440M380 300H430M450 244H500M512 178V200M526 178V200M550 178V200" />
    <T x={534} y={123} s={13}>+1.200</T><T x={316} y={178} s={11}>+0.000</T><P w={2} d="M298 170H334V186H298Z" />
    <T x={534} y={309} s={11}>-2.100</T><T x={268} y={182} s={12}>3400</T><T x={398} y={348} s={12}>6300</T><T x={322} y={348} s={12}>850</T><T x={530} y={348} s={12}>3000</T><T x={498} y={348} s={12}>600</T>
    {[[255, 280], [345, 275], [400, 268], [446, 255], [564, 215], [500, 195], [350, 195], [400, 225], [295, 200], [296, 308], [510, 284], [342, 315], [424, 188], [515, 228], [446, 272], [386, 280]].map(([x, y]) => <T key={`${x}-${y}`} x={x} y={y} s={11}>Ст1</T>)}
    {["1", "3", "4", "5", "6", "2"].map((t, i) => <T key={t} x={[452, 482, 510, 360, 395, 448][i]} y={[135, 132, 132, 312, 325, 312][i]} s={13}>{t}</T>)}
    <T x={286} y={268} r={-90} s={12}>2600</T><T x={532} y={240} r={-90} s={12}>1500</T><T x={418} y={318} r={-90} s={12}>800</T>
    <ChainV x={624} ys={[152, 196, 268, 382]} labels={["1400", "3200", "5100"]} />
    <ChainV x={644} ys={[152, 382]} labels={["10000"]} />
    <P w={2} d="M568 268H624M577 152H644M600 382H650M550 195H580M575 195V220M565 180V225" />
    <Chain y={446} xs={[229, 568]} labels={["15500"]} h={32} />
    <ChainV x={130} ys={[280, 325, 382, 440]} labels={["1200", "2100", "2100"]} />
    <P w={2} d="M130 300H160M160 284H210M180 334H346M276 290V345M296 334V345M136 350H155L160 325M136 406H155L160 382M136 463H155L160 440M165 318H185L206 300M190 325V334" />
    {[[143, 343], [143, 398], [143, 455], [175, 308]].map(([x, y]) => <T key={y} x={x} y={y} s={13}>Ст1</T>)}
    <T x={178} y={277} s={12}>2400</T><T x={195} y={327} s={12}>1000</T><T x={254} y={327} s={12}>2500</T><T x={314} y={327} s={12}>2000</T>
    <T x={262} y={346}>1</T><T x={256} y={413}>3</T><T x={300} y={435} s={14}>4</T>

    <T x={750} y={112} a="start" s={15}>Монтажная схема площадки</T>
    <T x={750} y={131} a="start" s={15}>обслуживания емкости на отм. +2.700</T>
    <P w={3} dash="8 5" d="M805 203H980Q1020 210 1020 258T980 313H805Q757 305 757 258T805 203ZM757 258H1020" />
    <P w={4} d="M803 212H947V282H803ZM853 212V282M898 212V282M930 212V282M947 212H1016V282H947" />
    <P w={3} d="M853 212L868 248L853 282M874 212V230M874 262V282M864 240H884V262H864ZM880 258H898M812 192H835L832 178H818ZM770 170H790V210H803M775 290L803 282M770 235H800L815 222M985 180L955 214M955 200V310M965 200V300" />
    <circle cx="805" cy="218" r="16" fill="none" stroke={ink} strokeWidth="3" /><circle cx="823" cy="180" r="10" fill="none" stroke={ink} strokeWidth="3" />
    <T x={801} y={158}>ОС</T><T x={846} y={160}>С</T><T x={780} y={178}>1</T><T x={775} y={297}>1</T><T x={782} y={233}>10</T>
    <Chain y={184} xs={[852, 926, 960]} labels={["1720", "600"]} />
    <Chain y={340} xs={[803, 853, 898, 947]} labels={["1400", "1000", "1400"]} h={30} />
    <Chain y={362} xs={[803, 947]} labels={["5200"]} />
    <ChainV x={987} ys={[212, 258, 300]} labels={["600", "600"]} /><ChainV x={1012} ys={[212, 284]} labels={["1200"]} />
    <Lead x={968} y={173} t="контур площадки" w={92} />
    <T x={970} y={187} a="start" s={11}>емкости</T>

    <T x={211} y={489} s={15}>2 - 2</T>
    <P w={9} d="M139 547H292" /><P w={3} d="M139 525H292M139 535H292M139 525V545M166 525V545M184 525V545M240 525V545M262 525V545M292 525V545" />
    <P w={9} dash="7 2" d="M135 634H296" /><P w={4} d="M146 550V630M157 550V630M211 510V630M220 550V630M272 550V630M288 550V630" />
    <P w={3} d="M148 560L156 580L148 600L156 625M274 560L286 580L274 600L286 625M160 555L176 540H195M162 628L180 610M125 525L138 545M118 595L145 615" />
    <T x={140} y={514}>ОГ</T><T x={210} y={514}>ОГ</T><T x={270} y={514}>ОГ</T><T x={123} y={521}>1</T><T x={118} y={595}>2</T><T x={176} y={603}>3</T>
    <Level x={325} y={529} t="+0,000" /><Level x={325} y={610} t="-2,000" />

    <T x={579} y={472} s={15}>3 - 3</T>
    <P w={5} d="M475 603L556 526H606L668 582M466 594L556 512H606M606 512L660 560" /><P w={3} d="M460 582L556 503H606L655 548M556 503V605M606 503V605M480 578V600M500 560V582M520 543V565M540 528V548M625 528V550M640 540V562M575 505V526M590 505V526M490 570L530 590M510 550L506 600" />
    <P w={8} dash="9 2" d="M442 608H684" /><path d="M652 550H658V606H652ZM668 550H674V606H668ZM652 562H674V570H652ZM652 580H674V606H652ZM466 594H490V606H466Z" /><P w={3} d="M398 603H450M445 590V606M670 570H690M640 585L690 600M620 560L640 600M436 576L445 592" />
    <T x={452} y={565} s={11}>перила</T><T x={438} y={577} s={12}>ОГ</T><T x={588} y={493}>ОГ</T><T x={640} y={518}>1</T><T x={488} y={545}>1</T><T x={664} y={543}>ОП</T><T x={566} y={547}>2</T><T x={594} y={545}>3</T><T x={620} y={590}>4</T><T x={514} y={587}>5</T>
    <Chain y={638} xs={[451, 556, 606, 676]} labels={["4400", "2400", "3500"]} h={30} />
    <Level x={706} y={507} t="+0,000" /><Level x={700} y={551} t="-0,600" /><Level x={700} y={586} t="-1,200" /><Level x={700} y={615} t="-1,800" />

    <T x={872} y={462} s={15}>4 - 4</T>
    <P w={4} d="M865 492V572M888 492V572M862 494H893M862 516H893M862 536H893M862 545L825 575M893 545L930 575M800 573H850M865 555L888 572M865 572L888 555M850 545H908" />
    <P w={8} dash="7 2" d="M866 582H932" /><P w={5} d="M824 568L842 590M842 568L824 590M815 576H848M920 570L938 590M868 592H925" />
    <circle cx="831" cy="580" r="16" fill="none" stroke={ink} strokeWidth="3" />
    <T x={843} y={493}>ОГ</T><T x={836} y={517}>Б</T><T x={826} y={537}>8</T><T x={924} y={537}>8</T><T x={804} y={596}>11</T>
    <T x={914} y={491}>1</T><Lead x={912} y={507} t="1.450.3-7.94 вып.2" w={112} /><P w={2} d="M912 496L898 540M808 590L820 582M905 605L895 592" />
    <Lead x={905} y={605} t="подливка" w={50} /><T x={905} y={618} a="start" s={11}>толщиной 50</T>
    <Level x={962} y={522} t="+0,000" /><Level x={962} y={555} t="-0,200" />
  </Third>
);

const markRows = ["1", "2", "3", "4", "5", "6", "7", "8", "Ст1", "Ст2", "ОГ", "ОЛ", "ОС", "С", "П", "Н", "ЩО", ""];
const Elevations = () => (
  <Third x={1165} y={360}>
    <T x={233} y={123} s={15}>1 - 1</T>
    <Level x={146} y={112} t="+0,000" /><Level x={146} y={214} t="+0,700" /><Level x={146} y={330} t="-0,500" />
    <P w={3} d="M263 132V186M329 132V186M263 130H329M258 134L268 126M324 134L334 126M263 182L268 172M329 182L334 172" />
    <P w={4} d="M193 188H331V240H193ZM210 188V244M231 188V350M246 188V240M263 188V240M320 188V240M331 188V262M193 244H231M246 238H331M206 305V348" />
    <P w={3} d="M193 214H331M225 325V350M206 350H244V374H206ZM208 365V390M244 365V390M180 374H244M300 210L285 236H250M260 270L270 300L310 318M178 172H200L200 205M315 202L348 194M262 280L300 310" />
    <circle cx="264" cy="272" r="12" fill="none" stroke={ink} strokeWidth="3" /><path d="M258 254H270V264H258ZM326 250H338V262H326Z" />
    <circle cx="304" cy="313" r="56" fill="none" stroke={ink} strokeWidth="3" strokeDasharray="9 5" />
    <P w={3} dash="14 4 4 4" d="M232 313H370M304 244V372" />
    <T x={298} y={125} s={12}>В</T><T x={182} y={169}>ОС</T><T x={343} y={190}>ОГ</T><T x={216} y={264}>С</T><T x={186} y={302}>ОГ</T><T x={182} y={375}>Ст</T><T x={262} y={358}>4</T><T x={277} y={295} s={11}>75</T>
    <Lead x={290} y={384} t="контур сбор." w={66} to={[282, 350]} /><T x={318} y={400} s={11}>емкости</T>

    <T x={196} y={443} s={15}>5 - 5</T>
    <P w={4} d="M160 490V572M227 490V572M163 495L224 570M224 500L163 570M140 572H242M172 500H218" />
    <circle cx="161" cy="500" r="12" fill="none" stroke={ink} strokeWidth="3" /><circle cx="161" cy="570" r="12" fill="none" stroke={ink} strokeWidth="3" /><circle cx="193" cy="536" r="8" fill="none" stroke={ink} strokeWidth="4" />
    <path d="M150 524H168V546H150ZM221 524H237V546H221ZM153 564H170V574H153ZM221 562H232V572H221Z" />
    <P w={3} d="M150 472L162 494M182 480L168 495M244 475L226 500M180 514L193 530M130 590L152 575M195 560H210" />
    <T x={139} y={471} s={12}>12</T><T x={192} y={472} s={11}>Ø83x4</T><T x={187} y={487} s={11}>L=2300</T><T x={256} y={472} s={11}>Ø83x4</T><T x={250} y={487} s={11}>L=230</T><T x={248} y={508}>1</T><T x={131} y={592}>9</T><T x={202} y={560}>10</T>
    <Level x={90} y={480} t="+0,000" /><Level x={92} y={556} t="-0,500" /><Level x={286} y={480} t="+0,000" /><Level x={292} y={556} t="-0,500" />
    <Chain y={606} xs={[160, 227]} labels={["2000"]} h={16} />
    <T x={380} y={451} s={15}>6 - 6</T>
    <P w={4} d="M363 500V572M403 500V572M358 502H407" /><P w={3} d="M365 504L401 570M401 504L365 570M350 572H410M360 500L405 470H440M398 482L380 498" />
    <path d="M352 524H368V546H352ZM397 524H413V546H397ZM358 562H369V573H358ZM398 562H409V573H398Z" />
    <T x={424} y={464} s={11}>Ø83x4</T><T x={426} y={479} s={11}>L=230</T>
    <Chain y={606} xs={[363, 403]} labels={["1500"]} h={16} />

    <T x={696} y={81} s={15}>Ведомость элементов</T>
    <P w={4} d="M475 94H898V471H475ZM511 94V471M589 118V471M610 118V471M667 94V471M768 94V471M797 94V471M829 94V471M475 141H898" />
    <P w={3} d="M511 118H768M700 118V178M734 118V178" />
    <P w={3} d={markRows.map((_, i) => `M475 ${141 + i * 18.4}H898`).join("")} />
    <P w={3} d="M667 452V471M700 452V471M734 452V471M700 270V288" />
    <T x={493} y={118} s={11} r={-90}>Марка</T><T x={588} y={106} s={11}>Сечение</T><T x={717} y={106} s={10}>Опорные усилия</T><T x={548} y={130} s={11}>Эскиз</T><T x={599} y={130} s={8}>Поз.</T><T x={638} y={130} s={11}>Состав</T>
    <T x={683} y={130} s={9}>М, тм</T><T x={717} y={130} s={9}>N, т</T><T x={751} y={130} s={9}>Q, т</T><T x={776} y={117} s={10} r={-90}>Группа</T><T x={789} y={117} s={10} r={-90}>констр.</T><T x={806} y={117} s={10} r={-90}>Марка</T><T x={820} y={117} s={10} r={-90}>стали</T><T x={863} y={119} s={10}>Примечание</T>
    {markRows.map((m, i) => {
      const y = 151 + i * 18.4;
      const section = ["[ 12", "[ 16", "L 50x5", "[ 10", "L 100x7", "ПВ406", "Тр.Ø114x4", "[ 27", "Тр.Ø159x5", "Тр.Ø114x4"][i];
      const force = ["", "0.9", "конструктивно", "—//—", "по гибкости", "конструктивно", "по гибкости", "7.4", "по гибкости", "—//—"][i];
      return (
        <g key={i}>
          <T x={492} y={y} s={12}>{m}</T>
          {section && <T x={638} y={y} s={10}>{section}</T>}
          {force && <T x={force.length < 4 ? 684 : 717} y={y} s={10}>{force}</T>}
          {i < 16 && <><T x={782} y={y} s={12}>{i % 3 ? 4 : 3}</T><T x={813} y={y} s={10}>{[6, 8, 9].includes(i) ? "20" : "С245"}</T></>}
          {[10, 16].includes(i) && <T x={689} y={y} s={9}>выполнить по 1.450.3-7.94 в.2</T>}
          {i > 10 && i < 16 && <T x={690} y={y} s={12}>—//—</T>}
          {[6, 8, 9].includes(i) ? <circle cx="548" cy={y} r="7" fill="none" stroke={ink} strokeWidth="2" /> : [0, 1, 3, 7].includes(i) && <T x={547} y={y} s={12}>[</T>}
        </g>
      );
    })}
  </Third>
);

const DetailsLeft = () => (
  <Third x={845} y={570}>
    <NodeMark x={525} y={55} n="1" /><NodeMark x={709} y={40} n="2" /><NodeMark x={938} y={31} n="3" />
    <NodeMark x={178} y={250} n="7" /><NodeMark x={397} y={254} n="4" /><NodeMark x={616} y={263} n="8" /><NodeMark x={779} y={281} n="9" /><NodeMark x={965} y={266} n="10" /><NodeMark x={886} y={442} n="12" />
    <T x={150} y={79} s={15}>7 - 7</T>
    <P w={5} d="M125 174V115H190M142 172V137H190M128 118H150V137" /><P w={3} d="M190 108V146M120 174H148M160 96L150 118M160 150L172 140M184 124H198" /><T x={163} y={97}>5</T><T x={114} y={146}>6</T><T x={170} y={150}>6</T>

    <T x={299} y={57} s={15}>8 - 8</T>
    <P w={5} d="M276 96H324V144H276ZM285 105H315V135H285ZM294 114H306V126H294Z" /><P w={3} dash="6 3" d="M270 90H330V150H270ZM299 80V160M262 120H338" />
    <P w={3} d="M284 150V220M318 150V220M292 150L288 180M310 150L314 180M330 104H406M330 138H406M352 96V150M378 96V140M400 96V140M322 150L345 172H360M265 84H240M345 74L322 98M345 74H395" />
    <T x={254} y={72} s={11}>4 болта</T><T x={245} y={88} s={11}>М16</T><T x={370} y={65} s={11}>подошва</T><T x={370} y={80} s={11}>рамы ОГ</T><T x={378} y={101} s={12}>200</T><T x={378} y={135} s={12}>200</T><T x={397} y={120} s={11} r={-90}>150</T>
    <T x={276} y={170} s={12}>50</T><T x={325} y={170} s={12}>50</T><T x={274} y={192} s={11}>100</T><T x={326} y={192} s={11}>100</T><Chain y={222} xs={[284, 318]} labels={["200"]} h={30} /><Lead x={355} y={173} t="Тр.Ø114x4" w={50} />

    <P w={5} d="M511 102H560M511 130H560M495 130H527M494 138H522M498 140V184M518 140V184M511 100V130" /><P w={3} dash="8 4" d="M508 90V200" /><P w={3} d="M490 184H528M556 96V136M470 92H490L505 110M530 92H545L520 112M452 154H475L498 136M515 165L535 178" />
    <T x={482} y={82} s={12}>[ 12</T><T x={537} y={82} s={12}>[ 12</T><T x={463} y={148} s={12}>δ=6</T><Lead x={535} y={173} t="Тр.Ø83x4" w={52} />

    <P w={6} d="M662 98H776M662 134H776M696 98V206M722 98V206M662 140H730" /><P w={5} d="M700 100H722V134H700ZM700 112H722M700 124H722M706 100V134" /><P w={3} dash="10 3 3 3" d="M709 70V214M655 116H780" /><P w={3} d="M662 92V140M776 92V138M690 212H728M668 165L655 145M665 142H640M675 78L700 104M745 78L718 104M660 78L672 96M755 80L740 95M785 100L760 112M722 150L745 192M722 135L775 156" />
    <P w={4} d="M682 170L652 212M694 178L664 220M670 196L680 202M662 206L672 212" /><path d="M682 166L694 172L690 190L674 184Z" /><P w={3} d="M650 205L668 222L672 236H700M690 180L700 160" />
    <T x={684} y={68} s={12}>[ 16</T><T x={735} y={68} s={12}>δ=8</T><T x={661} y={78} s={12}>7</T><T x={757} y={78} s={12}>7</T><T x={794} y={96} s={12}>[ 16</T><T x={643} y={135} s={12}>[ 12</T><T x={645} y={164} s={12}>δ=6</T><T x={748} y={160} s={12}>δ=6</T><Lead x={775} y={152} t="Болт М16" w={52} /><Lead x={738} y={187} t="Тр.114x4" w={46} /><T x={684} y={234} s={12}>L 50x5</T>

    <P w={5} d="M927 80V178M950 80V178M864 78L912 140M872 72L918 134M915 172H960" /><path d="M902 118L916 110V145L902 140Z" /><P w={3} dash="8 4" d="M938 70V230" /><P w={4} d="M890 184H985M890 226H985M900 176L890 230" /><P w={3} d="M895 205L912 190M900 222L930 190M925 222L955 190M945 222L975 190M858 65H925M925 65L930 80M820 116H850L880 90M880 130V160H915M872 146H915M900 100H925M955 180L985 235" />
    <T x={893} y={58} s={12}>Тр.Ø114x4</T><T x={833} y={108} s={11}>L 50x5</T><T x={872} y={140} s={12} r={-90}>150</T>

    <T x={130} y={272} s={11}>L 100x7</T><P w={5} d="M168 298V362M189 298V350M185 340L232 306M192 348L238 316M160 366H200M142 370H216M142 392H216" /><path d="M176 336L190 330L194 345L178 348Z" /><P w={3} d="M110 278H148L170 302M162 292L172 300L184 290L196 300M138 362V400M216 362V400M130 350H148L165 362M215 325L240 345M170 380L225 405M228 300L240 320" />
    <T x={143} y={342} s={12}>δ=6</T><Lead x={235} y={341} t="L 50x5" w={36} /><Lead x={226} y={402} t="заполнить" w={64} /><T x={226} y={418} a="start" s={11}>после</T>

    <P w={5} d="M381 342H418M381 352H418M395 352V382M405 352V382" /><P w={3} d="M383 300V342M400 300V342M415 300V342M365 310H450M378 328H512M356 345V375M350 352H384M350 375H362M402 384L425 386M410 352L425 362" />
    <T x={371} y={302} s={11}>200</T><T x={371} y={319} s={11}>100</T><T x={446} y={302} s={11}>400 (Ст3)</T><T x={466} y={320} s={10}>200 (Ст1,Ст2,Ст4)</T><T x={348} y={366} s={12} r={-90}>1500</T><T x={436} y={358} s={12}>[ 16</T><Lead x={425} y={381} t="Тр.Ø83x4" w={48} />

    <P w={4} d="M607 298V345M618 298V340M596 370L656 318V384H585L618 340" /><P w={3} d="M600 360L640 335M586 384Q600 340 620 345M604 384H656M625 345L640 380" /><P w={3} d="M552 304H585L607 320M556 344H575L600 360M604 384V402H645M620 370L640 365M650 340L668 350M652 360L668 345" />
    <T x={570} y={297} s={11}>L 100x7</T><T x={563} y={338} s={12}>δ=6</T><T x={626} y={397} s={11}>сварка</T><T x={618} y={412} s={11}>опора</T>

    <P w={4} d="M772 322V374M788 322V374M756 374H802V394H756Z" /><P w={5} dash="6 3" d="M758 384H800" /><P w={3} dash="8 4" d="M779 305V402" /><P w={3} d="M768 322H792M765 352H750V365M795 352H812V365M742 345V365M820 345V365M790 345L800 330M790 385L808 406" /><T x={742} y={340} s={11}>8</T><T x={820} y={340} s={11}>8</T><Lead x={798} y={320} t="Тр.Ø114x4" w={54} /><T x={830} y={396} s={11}>подошва</T><T x={830} y={410} s={11}>рамы ОГ</T>

    <P w={6} d="M938 384V322H1000M946 378V332H1000" /><P w={3} d="M912 290H934V305M916 405V418H934V428M925 350L940 360M922 380L938 370" /><T x={918} y={288}>7</T><T x={918} y={422}>7</T><T x={922} y={346}>6</T><T x={924} y={380}>5</T>

    <T x={224} y={470} s={15}>Стойки Ст1,Ст2</T><T x={468} y={467} s={15}>Стойки Ст3</T><T x={672} y={464} s={15}>Стойки Ст4</T>
    {[[188, 535, 605], [470, 525, 610], [675, 520, 608]].map(([x, y, b], i) => (
      <g key={i}>
        <circle cx={x} cy={y} r="12" fill="none" stroke={ink} strokeWidth="3" /><path d={`M${x - 12} ${y - 6}H${x + 12}V${y}H${x - 12}Z`} />
        <P w={4} d={`M${x} ${y + 5}V${b}M${x - 10} ${y + 10}H${x + 8}`} /><P w={3} d={`M${x + 2} ${y - 14}L${x + 16} ${y - 30}`} /><T x={x + 14} y={y - 37} s={12}>7</T><T x={x - 20} y={y + 5} s={12}>2</T>
      </g>
    ))}
    <P w={5} d="M175 600V656Q188 664 199 656V600M183 600V650M192 600V650" /><P w={3} d="M165 608H212M165 600V612M210 600V612M242 536V646M220 536H252M220 646H252M165 645L178 630M192 655L205 676H265M140 665H165" />
    <T x={234} y={590} s={11} r={-90}>2400 для Ст1</T><T x={251} y={590} s={11} r={-90}>3000 для Ст2</T><T x={324} y={497} s={11}>+1.200 для Ст1</T><T x={324} y={513} s={11}>+2.700 для Ст2</T><P d="M287 504V530M265 530H300M287 588V608M270 608H295M287 632V646M265 646H300M287 632H354" />
    <Lead x={290} y={588} t="поверхн." w={40} /><T x={305} y={610} s={11}>-0.500</T><T x={324} y={624} s={11}>для Ст1,Ст2</T><T x={142} y={649} s={11}>подошва</T><T x={142} y={663} s={11}>рамы ОГ</T><T x={236} y={669} s={11}>-8x100x150</T>
    {[[470, 0], [675, -3]].map(([x, dy]) => (
      <g key={x} transform={`translate(${x - 470} ${dy})`}>
        <circle cx="470" cy="615" r="13" fill="none" stroke={ink} strokeWidth="4" /><P w={4} d="M446 612H494M446 626H494M446 604V632M494 604V632" />
        <P w={3} d="M508 525V608M490 525H515M490 608H538M527 508V520M515 520H540M527 508H566M527 596V608M527 598H566M420 594H452L465 608M474 625L500 636H555" />
        <T x={546} y={501} s={11}>-0.500</T><T x={546} y={590} s={11}>-0.500</T><T x={498} y={568} s={12} r={-90}>2110</T><T x={429} y={573} s={11}>подошва</T><T x={429} y={587} s={11}>рамы ОГ</T><T x={528} y={629} s={11}>-8x100x150</T>
      </g>
    ))}

    <P w={5} d="M875 530H938M893 532V592M900 532V592M880 594H950M888 596V668M922 596V668M928 596V640H948V596" /><path d="M895 528L915 514H935L912 532Z" /><P w={3} dash="8 4" d="M906 480V690" /><P w={3} d="M870 488H938M870 480V496M906 480V496M938 480V496M880 508H930M938 525L950 500H990M880 530L865 562M882 600L862 622H840M900 650L880 660H820M950 605L965 622H985M882 668H930M912 575L925 560" />
    <P w={5} d="M928 632L960 680M942 626L972 672M940 648L952 642M948 662L962 656" /><path d="M925 625L940 620L946 640L932 644Z" /><T x={887} y={480} s={11}>120</T><T x={924} y={480} s={11}>120</T><T x={893} y={501} s={11}>100</T><T x={919} y={501} s={11}>100</T><T x={984} y={492} s={11}>Болт М20</T><Lead x={822} y={554} t="-200x10" w={42} /><T x={928} y={568} s={12}>[ 27</T><T x={850} y={614} s={12}>δ=6</T><T x={974} y={616} s={12}>δ=6</T><T x={845} y={650} s={11}>Тр.Ø83x4</T>
  </Third>
);

const siteNotes: [string, boolean][] = [
  ["1. Сварку производить электродами типа Э-42 по ГОСТ 9467-75* в", true],
  ["соответствии с ГОСТ 5264-80*.", false],
  ["2. Сварные швы принимать по наименьшей толщине свариваемых", true],
  ["элементов.", false],
  ["3. Монтажные соединения осуществлять на болтах нормальной точности", true],
  ["М12 по ГОСТ 7798-70*, кроме оговоренных.", false],
  ["4. За относительную отметку 0.000 принят верх фундамента под емкость", true],
  ["(опорная поверхность низ.), что соответствует абсолютной отметке 74.60", true],
  ["5. Расход бетона В7.5 - 0.5м³.", false],
  ["6. Крепление настилов прямоугольных к швеллерным балкам площадки", true],
  ["производить швами 4-100 с шагом 150мм", false],
];
const DetailsRight = () => (
  <Third x={1165} y={570}>
    <NodeMark x={190} y={22} n="5" /><NodeMark x={419} y={36} n="6" /><NodeMark x={187} y={286} n="11" /><NodeMark x={136} y={493} n="13" />
    <P w={5} d="M155 68V222M182 68V222M236 66L200 112M244 72L206 118M205 172L234 240M196 178L226 238M182 148H268M182 157H268" /><path d="M190 110L205 105V140L190 145ZM188 160H204V190L190 200Z" />
    <P w={3} dash="9 3 3 3" d="M168 55V235M205 80V210" /><P w={3} d="M188 100V205M150 66H186M150 220L165 230L184 215M230 60L246 76M262 144V162M222 242L242 232M250 105H285M250 105L222 80M250 105L240 145M236 192H272M236 192L222 215M132 140H150L184 130M94 185H148L158 170M180 100L192 90" />
    <T x={266} y={98} s={11}>L 50x5</T><T x={255} y={185} s={11}>L 50x5</T><T x={141} y={134} s={12}>δ=6</T><T x={121} y={178} s={11}>Тр.Ø114x4</T>
    <P w={5} d="M386 68V150M396 68V150M382 118V146M398 118H442M398 126H442M400 130H410V152" /><P w={4} d="M392 154V230M413 154V226M405 182L458 212M412 172L464 202" /><P w={3} d="M384 66H398M385 156H416M440 112V132M390 228L404 236L416 222M354 114H375M445 125L470 140M410 140L430 156H450M360 162L388 138M345 162H362M332 198H372L392 205M455 170H490M455 170L445 195M465 200L450 218M400 185L415 172" />
    <T x={361} y={107} s={12}>ОГ</T><T x={467} y={135} s={12}>П</T><T x={440} y={149} s={11}>[ 10</T><T x={353} y={156} s={12}>δ=6</T><T x={474} y={163} s={11}>L 50x5</T><T x={351} y={191} s={11}>L 100x7</T>
    <P w={4} d="M-10 190L10 180L0 215L32 205M-10 180H22M5 225L25 238" /><Lead x={22} y={231} t="подливка ОГ" w={72} />
    <P w={3} dash="8 3" d="M-8 325H42M-8 344H42M42 325V385" /><P w={5} d="M44 335V384H-8" /><P w={3} d="M25 310L32 325M22 365H12M15 364H30M50 345L60 360H98M20 388V400" /><T x={30} y={304}>5</T><T x={26} y={400}>С</T><T x={80} y={353} s={11}>по п.п.6</T>
    <P w={5} d="M165 362V412H208V362M132 360H240" /><P w={3} d="M168 395L198 365M168 408L205 372M180 410L206 385M170 378L185 363M195 410L206 400" /><P w={5} dash="6 3" d="M170 370H206M172 385H204" /><P w={4} d="M180 345V372M188 340V372M196 348V372" /><P w={3} d="M126 323H152L180 345M135 388H160L170 375M98 413H150L166 398M215 345V360M218 345H232M230 330V410M222 410H238M240 358V338H308M205 370H235" />
    <T x={135} y={316} s={11}>[ 10</T><T x={147} y={333} s={11}>L=700мм</T><T x={274} y={331} s={11}>уровень пол.</T><T x={268} y={346} s={11}>площадки</T><T x={128} y={382} s={11}>300</T><T x={124} y={406} s={11}>бетон В7.5</T><T x={221} y={395} s={11} r={-90}>800</T><T x={221} y={335} s={11} r={-90}>50</T>
    <Chain y={438} xs={[164, 209]} labels={["500"]} h={20} />
    <path d="M118 545L128 543L162 588L150 590ZM125 560L155 562L150 578L130 580Z" /><P w={5} d="M168 536L148 554M177 543L156 564M104 600L125 578M112 610L134 588" /><P w={3} d="M160 535H180M115 545V560M158 570H182M104 612L120 600M156 616L122 600M156 616L150 592M158 620H198M100 600L112 612" />
    <T x={195} y={566} s={12}>δ=8</T><T x={179} y={611} s={11}>2L 50x5</T><T x={47} y={659} s={11}>2L 50x5</T><P w={2} d="M0 628H24M26 667H66" />
    <Notes x={524} y={303} w={392} lines={siteNotes} />
    <Stamp x={541} y={576} name={[[170, 87, 80, 9], [146, 96, 128, 9], [200, 105, 20, 12]]} />
  </Third>
);
const SheetFour = () => (
  <>
    <Third x={845} y={360}>
      <P color="#1f2729" w={4} d="M18 13H1918V1375H18Z" />
      <P color="#5a6365" d="M91 67H1896V1327H91Z" />
      <SideStrip x={72} y={1190} />
    </Third>
    <Plans /><Elevations /><DetailsLeft /><DetailsRight />
  </>
);

/* ---------- canvas overlays ---------- */
const navStroke = "#b3bbbe";
const Overlays = () => (
  <>
    <ViewLabel><PlainBtn>[−]</PlainBtn><PlainBtn>[Сверху]</PlainBtn><PlainBtn>[2D-каркас]</PlainBtn></ViewLabel>
    <DocControls>
      <button aria-label="Свернуть чертёж"><Glyph width="14" height="14" viewBox="0 0 14 14"><rect x="1.500" y="7.500" width="11" height="4" fill="#fff" stroke="#5c6568" /></Glyph></button>
      <button aria-label="Восстановить"><Glyph width="14" height="14" viewBox="0 0 14 14" fill="#fff" stroke="#4f585b"><rect x="4" y="1" width="9" height="9" /><rect x="1.500" y="3.500" width="9" height="9" /><rect x="4.500" y="6.500" width="3" height="3" /></Glyph></button>
      <button aria-label="Закрыть чертёж"><Glyph width="14" height="14" viewBox="0 0 14 14" fill="#fff" stroke="#4f585b"><path d="M1.500 2H5.500L7 4.500L8.500 2H12.500L9.500 7L12.500 12H8.500L7 9.500L5.500 12H1.500L4.500 7Z" /></Glyph></button>
    </DocControls>
    <Cube>
      <Compass>
        <Cardinal $area="1 / 2">С</Cardinal><Cardinal $area="2 / 1">З</Cardinal><Face>Сверху</Face><Cardinal $area="2 / 3">В</Cardinal><Cardinal $area="3 / 2">Ю</Cardinal>
      </Compass>
      <Wcs>МСК<Glyph width="9" height="5" viewBox="0 0 9 5"><path d="M.5 .5H8.500L4.500 4.500Z" fill="none" stroke="#9aa0aa" /></Glyph></Wcs>
    </Cube>
    <NavBar>
      <Glyph width="24" height="24" viewBox="0 0 26 26" fill="none" stroke={navStroke}><path d="M22 25H4V2H22V16" /><circle cx="13" cy="12" r="8" /><circle cx="13" cy="12" r="5" /></Glyph>
      <Caret w={5} color={navStroke} />
      <Glyph width="24" height="26" viewBox="0 0 24 28" fill="none" stroke={navStroke}><path d="M7 26L2 15L4 13L8 17V5L11 4V12L12 2H15V12L17 4H19V13L21 8L23 9L20 26Z" /></Glyph>
      <Glyph width="24" height="24" viewBox="0 0 24 24" fill="none" stroke={navStroke}><path d="M2 2L16 16M2 2V7M2 2H7M16 2L2 16V12M2 16H7" /><circle cx="17" cy="15" r="5" /><path d="M20 19L23 23" /></Glyph>
      <Caret w={5} color={navStroke} />
      <Glyph width="22" height="22" viewBox="0 0 24 24" fill="none" stroke={navStroke}><path d="M12 0L16 5H14V22H10V5H8ZM1 13Q12 5 22 11M1 13L6 10M1 13L6 16Q14 20 22 15" /></Glyph>
      <Caret w={5} color={navStroke} />
      <Glyph width="22" height="22" viewBox="0 0 24 24" fill="none" stroke={navStroke}><path d="M1 1H7V7H1ZM9 1H15V7H9ZM17 1H23V7H17ZM1 11H17V23H1Z" /><path d="M6 13L13 17L6 21Z" fill={navStroke} /></Glyph>
    </NavBar>
    <Ucs width="80" height="80" viewBox="0 0 80 80" fill="none" stroke="#2a3133">
      <path d="M6.500 20V69.500H57" strokeWidth="1.300" /><rect x="2.500" y="64.500" width="9" height="9" strokeWidth="1.300" /><path d="M8 3L14 9L20 3M14 9V16M61 56L73 69M73 56L61 69" strokeWidth="1.200" />
    </Ucs>
    <Crosshair width="90" height="92" viewBox="0 0 90 92" fill="none" stroke="#15191b">
      <path d="M49.500 0V45M49.500 51V92M1 48.500H46M52 48.500H90" /><rect x="46.500" y="45.500" width="6" height="6" strokeWidth="1.300" />
    </Crosshair>
    <CommandLine>
      <CommandTools>
        <Glyph width="6" height="18" viewBox="0 0 6 18"><path stroke="#d5d9dc" strokeWidth="1.500" strokeDasharray="1.500 1.500" d="M1 0V18M3.500 0V18M6 0V18" /></Glyph>
        <button aria-label="Закрыть командную строку"><Glyph width="9" height="9" viewBox="0 0 9 9"><path d="M0 0L9 9M9 0L0 9" stroke="#eceef0" strokeWidth="2" /></Glyph></button>
        <button aria-label="Настройка"><Glyph width="15" height="14" viewBox="0 0 18 16"><path d="M1 14L9 7Q8 3 11 1L13 0L12 4L14 5L17 4Q17 8 13 9L11 9L4 16Z" fill="#eceef0" /></Glyph></button>
      </CommandTools>
      <CommandField>
        <Glyph width="16" height="12" viewBox="0 0 16 12" fill="none" stroke="#7a8286"><rect x=".5" y=".5" width="15" height="11" /><path d="M.5 2.500H15.500M3 5L5.500 7L3 9M7 9.500H11" /></Glyph>
        <Caret w={8} color="#7a8286" />
        <CommandInput placeholder="Введите команду" aria-label="Команда" />
        <Glyph width="7" height="4" viewBox="0 0 7 4"><path d="M0 4H7L3.500 0Z" fill="#7a8286" /></Glyph>
      </CommandField>
    </CommandLine>
  </>
);

/* ---------- ribbon ---------- */
const tabs = ["Главная", "Вставка", "Аннотации", "Параметризация", "3D-инструменты", "Визуализация", "Вид", "Управление", "Вывод", "Надстройки", "Совместная работа", "Рекомендованные приложения", "Express Tools", "Raster Tools"];
const RibbonArea = () => (
  <Ribbon>
    <Panel $w={260}>
      <PanelBody>
        <BigTool n="line" w={53} label="Отрезок" /><BigTool n="pline" w={68} label="Полилиния" />
        <BigTool n="circle" w={48} label="Круг" drop /><BigTool n="arc" w={46} label="Дуга" drop />
        <Grid $cols="38px"><WithDrop n="rect" /><WithDrop n="ellipse" /><WithDrop n="hatch" /></Grid>
      </PanelBody>
      <Title>Рисование</Title>
    </Panel>
    <Panel $w={132}>
      <PanelBody $pad={2}>
        <Grid $cols="24px 24px 34px 24px" $gap={6}>
          <Small n="move" /><Small n="rotate" /><WithDrop n="trim" /><Small n="erase" />
          <Small n="copy" /><Small n="mirror" /><WithDrop n="fillet" /><Small n="explode" />
          <Small n="stretch" /><Small n="scale" /><WithDrop n="array" /><Small n="offset" />
        </Grid>
      </PanelBody>
      <Title>Редактирование</Title>
    </Panel>
    <Panel $w={139}>
      <PanelBody $pad={4}>
        <BigTool n="text" w={48} label="Текст" drop /><BigTool n="dim" w={50} label="Размер" />
        <Grid $cols="34px"><WithDrop n="dim" /><WithDrop n="leader" /><Small n="table" /></Grid>
      </PanelBody>
      <Title>Аннотации</Title>
    </Panel>
    <Panel $w={270}>
      <PanelBody>
        <BigTool n="layerProps" w={60} label="Свойства" second="слоя" />
        <Stack>
          <Combo>
            <Icon><Bulb x={8} y={6} r={5} /></Icon><Icon><Sun r={4.5} long={8} /></Icon>
            <Icon><path stroke={c.amber} strokeWidth="2" d="M9 8V3Q12 -1 15 3V5" /><rect x="1" y="8" width="11" height="8" fill={c.amber} stroke="none" /><rect x="6" y="10" width="2" height="3" fill={c.field} stroke="none" /></Icon>
            <Swatch />
            <Choice aria-label="Слой"><option>По умолчанию</option></Choice><Caret w={8} />
          </Combo>
          <Grid $cols="repeat(5, 24px)">
            <Small n="lOff" /><Small n="lIso" /><Small n="lFreeze" /><Small n="lLock" /><Small n="lMake" />
            <Small n="lOn" /><Small n="lUniso" /><Small n="lThaw" /><Small n="lUnlock" /><Small n="lMatch" />
          </Grid>
        </Stack>
      </PanelBody>
      <Title>Слои</Title>
    </Panel>
    <Panel $w={85}>
      <PanelBody $pad={0}>
        <BigTool n="insert" w={47} label="Вставка" drop />
        <Grid $cols="34px"><Small n="blkNew" /><Small n="blkEdit" /><WithDrop n="attr" /></Grid>
      </PanelBody>
      <Title>Блок</Title>
    </Panel>
    <Panel $w={242}>
      <PanelBody $pad={2}>
        <BigTool n="match" w={80} label="Копирование" second="свойств" />
        <Grid $cols="22px">
          <Tool $w={22} aria-label="Цвет"><Icon>{["#f4d03f", "#6cc24a", "#28a4d9", "#6a5bd0", "#e0457b", "#f08c3a"].map((f, i) => <path key={f} fill={f} stroke="none" transform={`rotate(${i * 60} 8 8)`} d="M8 8V0A8 8 0 0 1 14.930 4Z" />)}</Icon></Tool>
          <Tool $w={22} aria-label="Вес линий"><Icon><path d="M0 1H16" /><path strokeWidth="2" d="M0 5H16" /><path strokeWidth="3" d="M0 9.500H16" /><path strokeWidth="3" d="M0 14.500H16" /></Icon></Tool>
          <Tool $w={22} aria-label="Тип линий"><Icon><path strokeDasharray="1 1" d="M0 2.500H16" /><path strokeDasharray="3 1" d="M0 6.500H16" /><path strokeDasharray="5 2" d="M0 10.500H16M0 14.500H16" /></Icon></Tool>
        </Grid>
        <Stack>
          <Combo><Swatch $gap={8} /><Choice aria-label="Цвет объекта"><option>ПоСлою</option></Choice><Caret w={8} /></Combo>
          <Combo><Sample /><Choice aria-label="Вес линии"><option>0.00 мм</option></Choice><Caret w={8} /></Combo>
          <Combo><Sample /><Choice aria-label="Тип линии"><option>SolidLi...</option></Choice><Caret w={8} /></Combo>
        </Stack>
      </PanelBody>
      <PanelTitle>Свойства<Caret w={8} /><Launcher><Glyph width="6" height="6" viewBox="0 0 6 6" stroke={c.text}><path d="M0 0L4 4" /><path d="M6 1V6H1Z" fill={c.text} stroke="none" /></Glyph></Launcher></PanelTitle>
    </Panel>
    <Panel $w={74}>
      <PanelBody>
        <BigTool n="group" w={47} label="Группа" />
        <Grid $cols="24px"><Small n="ungroup" /><Small n="groupEdit" /><Small n="groupPick" /></Grid>
      </PanelBody>
      <Title>Группы</Title>
    </Panel>
    <Panel $w={105}>
      <PanelBody $pad={3}>
        <BigTool n="measure" w={76} label="Измерить" drop />
        <Grid $cols="24px"><Small n="quick" /><Small n="selAll" /><Small n="calc" /></Grid>
      </PanelBody>
      <Title>Утилиты</Title>
    </Panel>
    <Panel $w={99}>
      <PanelBody $pad={3}>
        <BigTool n="paste" w={69} label="Вставить" drop />
        <Grid $cols="24px"><Small n="cut" /><Small n="copyDoc" /></Grid>
      </PanelBody>
      <Title plain>Буфер обмена</Title>
    </Panel>
    <ViewPanel><ViewTop><BigIcon viewBox="0 0 36 36">{big.view}</BigIcon>Вид</ViewTop><Caret w={8} /></ViewPanel>
  </Ribbon>
);

/* ---------- status icons ---------- */
const st = {
  grid: <path d="M4 0V16M8 0V16M12 0V16M0 4H16M0 8H16M0 12H16" />,
  snap: <path strokeWidth="2" strokeDasharray="2 4" d="M1 3H16M1 8H16M1 13H16" />,
  ortho: <path strokeWidth="1.300" d="M1 1V15H16M1 10H5V15" />,
  polar: <><circle cx="7" cy="9" r="6" stroke="#fff" /><path stroke="#fff" d="M7 9H16M7 9L14 1M11 5V10" /></>,
  iso: <><path stroke={c.red} d="M2 1L14 16" /><path stroke={c.green} d="M8 0V16" /><circle cx="8" cy="8" r="1" fill="#fff" /></>,
  track: <><path strokeWidth="1.300" stroke="#fff" d="M1 14L14 2M1 14.500H16" /><circle cx="7" cy="9" r="1" fill="#fff" /></>,
  osnap: <><rect x="3" y="3" width="12" height="12" stroke="#fff" /><rect x="0.500" y=".5" width="4" height="4" fill={c.active} stroke="#fff" /></>,
  weight: <><path strokeWidth="1" d="M0 2H16" /><path strokeWidth="2" d="M0 6H9M0 10H12" /><path strokeWidth="3" d="M0 14H9M12 9H16" /></>,
  cycle: <><rect x="6" y="6" width="10" height="10" fill="#fff" stroke="none" /><path stroke="#fff" d="M5 12V4H13M3 0V6M0 3H6" /></>,
  ucs: <><path d="M3 2V13H15M1 4L3 1L5 4M13 11L16 13L13 15" /><path fill={c.icon} stroke="none" d="M12 2L8 7H11L9 10L14 6H11Z" /></>,
  anno: <path fill="#e6e7e8" stroke="none" d="M8 1L10 8L14 15L9 12V15H7V12L2 15L6 8Z" />,
};
const S = ({ n, on, extra }: { n: keyof typeof st; on?: boolean; extra?: React.ReactNode }) => (
  <Toggle $on={on} aria-label={n} aria-pressed={!!on}><Icon>{st[n]}{extra}</Icon></Toggle>
);
const D = ({ w }: { w?: number }) => <Drop $w={w} aria-label="Ещё"><Caret w={7} /></Drop>;

export default function App() {
  return (
    <Window>
      <GlobalStyle />
      <TitleBar>
        <Cluster>
          <Small n="newDoc" /><Small n="open" /><Small n="save" />
          <Tool aria-label="Сохранить как"><Icon>{icons.save}<g transform="translate(1 6)"><Pencil /></g></Icon></Tool>
          <Tool aria-label="Открыть с мобильного"><Icon><rect x="2" y="1" width="9" height="15" fill="#77797c" stroke="#b9bbbd" /><path d="M6 9H10L11 10H15V11H9L7 16H6Z" fill={c.amber} stroke="none" /><path d="M9 12H16L13 16H7Z" fill={c.amber} stroke="none" /></Icon></Tool>
          <Tool aria-label="Сохранить на мобильном"><Icon><rect x="5" y="1" width="9" height="15" fill="#77797c" stroke="#b9bbbd" /><path d="M0 5H5V2L10 6.500L5 11V8H0Z" fill={c.blue} stroke="none" /></Icon></Tool>
          <Small n="plot" />
          <Tool aria-label="Отменить"><Icon><path d="M0 8L6 3V6Q14 5 16 13Q12 10 6 10V13Z" fill="#e6e7e8" stroke="none" /></Icon></Tool>
          <Drop $w={12} aria-label="Список отмены"><Caret w={5} /></Drop>
          <Tool aria-label="Повторить"><Icon><path d="M16 8L10 3V6Q2 5 0 13Q4 10 10 10V13Z" fill="#5b626c" stroke="none" /></Icon></Tool>
          <Drop $w={10} aria-label="Список повтора"><Caret w={5} color="#868c95" /></Drop>
          <Drop $w={18} aria-label="Настройка панели"><Glyph width="8" height="8" viewBox="0 0 8 8"><path d="M0 0H8V1.500H0ZM0 3H8L4 7.500Z" fill={c.text} /></Glyph></Drop>
        </Cluster>
        <Caption>{"Autodesk AutoCAD 2020    Проект КМ емкости для сбора конденсата.dwg"}</Caption>
        <Cluster>
          <Tool $w={16} aria-label="Развернуть поиск"><Glyph width="4" height="8" viewBox="0 0 4 8"><path d="M0 0V8L4 4Z" fill="#fff" /></Glyph></Tool>
          <Search placeholder="Введите ключевое слово/фразу" aria-label="Поиск" />
          <Tool aria-label="Найти"><Icon><path fill="#e6e7e8" stroke="none" d="M3 1H6V5H10V1H13L15 8V15H10V9H6V15H1V8Z" /><path stroke={c.chrome} d="M1 10.500H6M10 10.500H15M8 5V8" /></Icon></Tool>
          <Tool aria-label="Профиль"><Icon><ellipse cx="8" cy="5" rx="4" ry="5" fill="#fff" stroke="none" /><path d="M6 9H10V11L15 13V15H1V13L6 11Z" fill="#e6e7e8" stroke="none" /></Icon></Tool>
          <Login>Вход в службы<Caret w={5} /></Login>
          <Tool aria-label="Магазин"><Icon><path d="M0 2H3L5 10H13" strokeWidth="1.500" stroke="#fff" /><path d="M4 4H15L13 9H5Z" fill="#fff" stroke="none" /><circle cx="6" cy="13.500" r="1.500" fill="#fff" stroke="none" /><circle cx="12" cy="13.500" r="1.500" fill="#fff" stroke="none" /></Icon></Tool>
          <Tool aria-label="Autodesk 360"><Icon><path d="M8 3L3 12H13Z" strokeWidth="2" stroke="#c4d3f2" /><circle cx="8" cy="3" r="2" fill="#fff" stroke="none" /><circle cx="3" cy="12" r="2" fill="#fff" stroke="none" /><circle cx="13" cy="12" r="2" fill="#fff" stroke="none" /></Icon></Tool>
          <Caret w={5} /><Rule />
          <Tool aria-label="Справка"><Icon><circle cx="8" cy="8" r="7" fill="#fff" stroke="none" /><path d="M5.500 6.500Q5.500 4 8 4T10.500 6.500Q10.500 7.500 8 9V10" stroke="#3157b5" strokeWidth="2" /><path d="M8 11V13" stroke="#3157b5" strokeWidth="2" /></Icon></Tool>
          <Caret w={5} />
        </Cluster>
        <WinControls>
          <Tool aria-label="Свернуть"><Icon><path d="M4 12.500H12" strokeWidth="2" /></Icon></Tool>
          <Tool aria-label="Развернуть"><Icon><rect x="2.500" y="3.500" width="11" height="9" strokeWidth="1.300" /></Icon></Tool>
          <Tool aria-label="Закрыть"><Icon><path d="M3 3L13 13M13 3L3 13" strokeWidth="2" /></Icon></Tool>
        </WinControls>
      </TitleBar>

      <Frame>
        <RibbonTabs>
          {tabs.map((t, i) => <RibbonTab key={t} $on={i === 0}>{t}</RibbonTab>)}
          <Tool $w={68} aria-label="Режим ленты"><Glyph width="24" height="8" viewBox="0 0 24 8"><rect width="14" height="8" rx="1" fill={c.icon} /><path d="M4 5.500H10L7 2.500Z" fill={c.chrome} /><path d="M19 3H24L21.500 6Z" fill={c.text} /></Glyph></Tool>
        </RibbonTabs>
        <RibbonArea />
        <FileTabs>
          <FileTab>Начало</FileTab>
          <FileTab $on>Проект КМ емкости для сбора конденсата
            <button aria-label="Закрыть вкладку"><Glyph width="9" height="9" viewBox="0 0 9 9"><path d="M1 1L8 8M8 1L1 8" stroke={c.dim} strokeWidth="2" /></Glyph></button>
          </FileTab>
          <AddFile aria-label="Новый чертёж"><Plus /></AddFile>
        </FileTabs>
        <Canvas>
          <Drawing viewBox="4 177 1484 828" preserveAspectRatio="xMinYMin meet" fill={ink}>
            <SheetOne /><SheetTwo /><SheetThree /><SheetFour />
          </Drawing>
          <Overlays />
        </Canvas>
        <BottomBar>
          <LayoutTabs>
            <LayoutTab $on $w={70}>Модель</LayoutTab><LayoutTab $w={65}>Layout1</LayoutTab><LayoutTab $w={65}>Layout2</LayoutTab>
            <LayoutTab $w={30} aria-label="Новый лист"><Split><Plus /></Split></LayoutTab>
          </LayoutTabs>
          <Status>
            <Group><ModelButton>МОДЕЛЬ</ModelButton></Group>
            <Group><S n="grid" /><S n="snap" /><D /></Group>
            <Group><S n="ortho" /><S n="polar" on /><D /><S n="iso" /><D /><S n="track" on /><S n="osnap" on /><D /></Group>
            <Group><S n="weight" /><S n="cycle" on /></Group>
            <Group><S n="ucs" /></Group>
            <Group><S n="anno" on extra={<circle cx="13.500" cy="3" r="2" />} /><S n="anno" extra={<path fill="#fff" stroke="none" d="M15 0L11 5H13L12 8L16 4H14Z" />} /><S n="anno" /><Toggle>1:1</Toggle><D w={9} /></Group>
            <Group>
              <Toggle aria-label="Рабочее пространство"><Icon><circle cx="8" cy="8" r="4" strokeWidth="3" />{[0, 45, 90, 135].map((a) => <path key={a} transform={`rotate(${a} 8 8)`} strokeWidth="3" d="M8 0V3M8 13V16" />)}</Icon></Toggle><D />
            </Group>
            <Group><Toggle aria-label="Масштаб аннотаций"><Icon><path strokeWidth="2" d="M8 0V16M0 8H16" /></Icon></Toggle></Group>
            <Group><Toggle aria-label="Изоляция объектов"><Icon><rect x="1" y="1" width="5" height="5" /><circle cx="13" cy="6" r="2.500" /><path d="M7 10L10 15.500H4Z" /></Icon></Toggle></Group>
            <Group>
              <Toggle aria-label="Аппаратное ускорение"><Icon><circle cx="8" cy="6" r="6" fill="#4a86cf" stroke="none" /><path stroke="#fff" d="M1 5H9M5 1V7" /><path d="M1 8H6V15H1ZM12 6L17 15H7Z" fill="#f2b632" stroke="none" /><path stroke="#333" d="M12 9V12M12 13V14" /></Icon></Toggle>
              <Toggle aria-label="Производительность"><Icon><rect x="0" y="1" width="13" height="11" fill={c.icon} stroke="none" /><path stroke="#3f7ac0" d="M1 9L4 3L7 9L10 4" /><path d="M11 6L16 15H6Z" fill="#e98a3c" stroke="none" /><path stroke="#fff" d="M11 9V12M11 13V14" /></Icon></Toggle>
            </Group>
            <Group>
              <Toggle aria-label="Чистый экран"><Icon><rect x=".5" y="2.500" width="15" height="12" /><path d="M9 8L12.500 5M12.500 5H10M12.500 5V7.500M7 9L3.500 12M3.500 12H6M3.500 12V9.500" /></Icon></Toggle>
              <Toggle aria-label="Адаптация"><Icon><path strokeWidth="2" d="M0 3H16M0 8H16M0 13H16" /></Icon></Toggle>
            </Group>
          </Status>
        </BottomBar>
      </Frame>

      <AppButton aria-label="Меню приложения">
        <Glyph width="39" height="39" viewBox="0 0 39 39">
          <path d="M4 28L13 3H20L28 28H22L20 22L11 24L9 28Z" fill="#c9242b" /><path d="M16 8L20 18L12 20Z" fill="#a5a6a8" /><path d="M4 28L13 3L16 8L9 28Z" fill="#e0484c" /><path d="M6 24Q14 12 23 13L24 17Q14 17 8 28Z" fill="#a81c23" />
          <path d="M30 17H37L33.500 21Z" fill="#3c3f44" />
        </Glyph>
      </AppButton>
    </Window>
  );
}
